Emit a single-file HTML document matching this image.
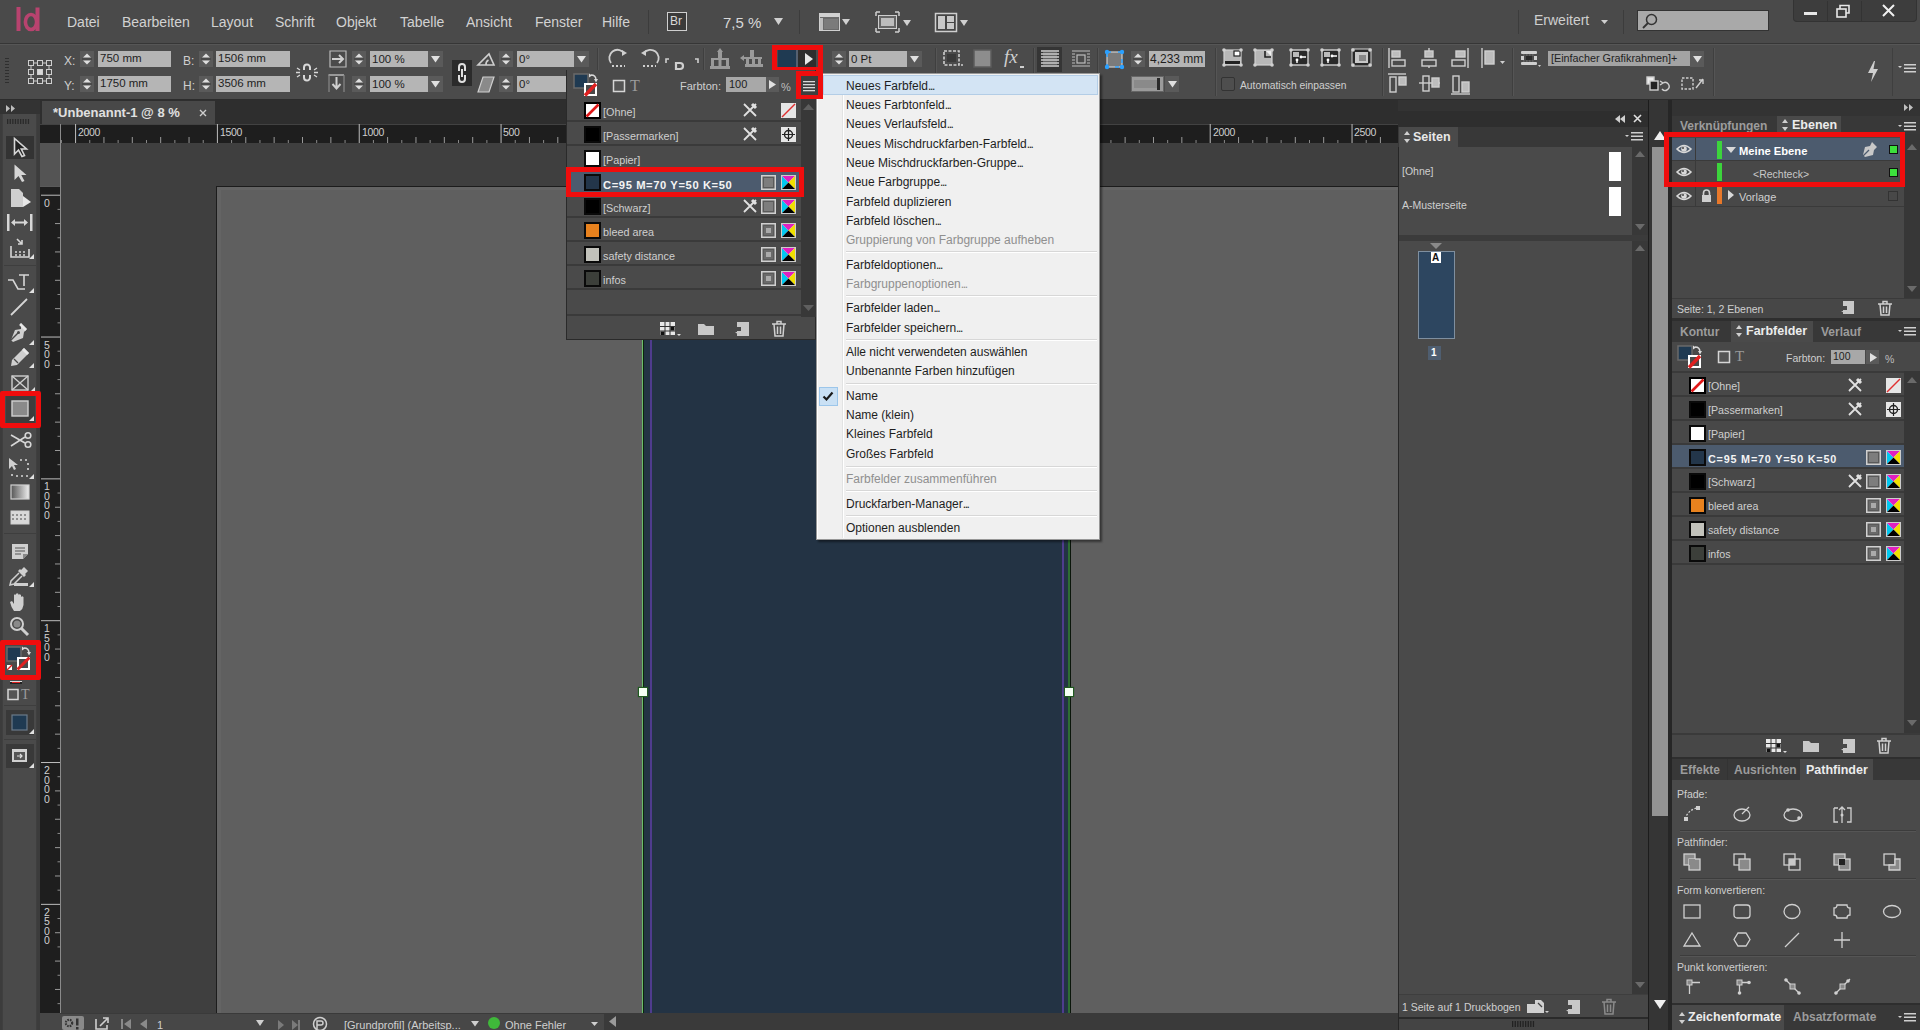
<!DOCTYPE html><html><head><meta charset="utf-8"><style>
*{margin:0;padding:0;box-sizing:border-box}
html,body{width:1920px;height:1030px;overflow:hidden;background:#424242;font-family:"Liberation Sans",sans-serif;color:#d8d8d8}
.a{position:absolute}
.t{white-space:nowrap;line-height:1}
svg{position:absolute;overflow:visible}
</style></head><body><div class="a" style="left:0px;top:0px;width:1920px;height:43px;background:#4a4a4a;"></div>
<div class="a" style="left:0px;top:43px;width:1920px;height:1px;background:#363636;"></div>
<div class="a" style="left:0px;top:44px;width:1920px;height:55px;background:#4b4b4b;"></div>
<div class="a" style="left:0px;top:44px;width:1920px;height:1px;background:#565656;"></div>
<div class="a" style="left:0px;top:99px;width:1920px;height:1px;background:#2c2c2c;"></div>
<div class="a" style="left:0px;top:100px;width:40px;height:930px;background:#3c3c3c;"></div>
<div class="a" style="left:0px;top:100px;width:40px;height:14px;background:#333333;"></div>
<div class="a" style="left:2px;top:114px;width:35px;height:916px;background:#4a4a4a;border-left:1px solid #3f3f3f;border-right:1px solid #3f3f3f;"></div>
<div class="a" style="left:40px;top:100px;width:1358px;height:24px;background:#2e2e2e;"></div>
<div class="a" style="left:42px;top:101px;width:173px;height:23px;background:#484848;"></div>
<div class="a" style="left:40px;top:125px;width:1358px;height:18px;background:#1e1e1e;"></div>
<div class="a" style="left:40px;top:143px;width:20px;height:872px;background:#1e1e1e;"></div>
<div class="a" style="left:40px;top:143px;width:20px;height:44px;background:#545454;"></div>
<div class="a" style="left:60px;top:124px;width:1px;height:891px;background:#8a8a8a;"></div>
<div class="a" style="left:61px;top:143px;width:1337px;height:872px;background:#3f3f3f;"></div>
<div class="a" style="left:216px;top:186px;width:1182px;height:829px;background:#5f5f5f;border-left:1px solid #1c1c1c;border-top:1px solid #1c1c1c;"></div>
<div class="a" style="left:217px;top:187px;width:4px;height:828px;background:#646464;"></div>
<div class="a" style="left:217px;top:187px;width:1181px;height:3px;background:#646464;"></div>
<div class="a" style="left:643px;top:186px;width:427px;height:829px;background:#233344;"></div>
<div class="a" style="left:642px;top:186px;width:1px;height:829px;background:#6cbc6c;"></div>
<div class="a" style="left:643px;top:186px;width:1px;height:829px;background:#0a260a;"></div>
<div class="a" style="left:650px;top:186px;width:2px;height:829px;background:#4f3c8e;"></div>
<div class="a" style="left:1062px;top:186px;width:2px;height:829px;background:#4f3c8e;"></div>
<div class="a" style="left:1068px;top:186px;width:2px;height:829px;background:#2e6e32;"></div>
<div class="a" style="left:1070px;top:186px;width:1px;height:829px;background:#0a160a;"></div>
<div class="a" style="left:639px;top:688px;width:8px;height:8px;background:#f4fff4;box-shadow:0 0 1px 1px #1f5a1f;"></div>
<div class="a" style="left:1065px;top:688px;width:8px;height:8px;background:#f4fff4;box-shadow:0 0 1px 1px #1f5a1f;"></div>
<div class="a" style="left:40px;top:1015px;width:1358px;height:15px;background:#474747;"></div>
<div class="a t" style="left:53px;top:106px;font-size:13px;color:#e0e0e0;font-weight:bold;">*Unbenannt-1 @ 8 %</div>
<svg style="left:199px;top:109px" width="8" height="8"><path d="M1 1L7 7M7 1L1 7" stroke="#cfcfcf" stroke-width="1.4"/></svg>
<svg style="left:0;top:0" width="1920" height="1030"><rect x="60.89" y="140" width="1" height="3" fill="#8a8a8a"/><rect x="75.07" y="124" width="1" height="19" fill="#bdbdbd"/><rect x="89.25" y="140" width="1" height="3" fill="#8a8a8a"/><rect x="103.44" y="137" width="1" height="6" fill="#9a9a9a"/><rect x="117.62" y="140" width="1" height="3" fill="#8a8a8a"/><rect x="131.80" y="137" width="1" height="6" fill="#9a9a9a"/><rect x="145.99" y="140" width="1" height="3" fill="#8a8a8a"/><rect x="160.17" y="137" width="1" height="6" fill="#9a9a9a"/><rect x="174.35" y="140" width="1" height="3" fill="#8a8a8a"/><rect x="188.53" y="137" width="1" height="6" fill="#9a9a9a"/><rect x="202.72" y="140" width="1" height="3" fill="#8a8a8a"/><rect x="216.90" y="124" width="1" height="19" fill="#bdbdbd"/><rect x="231.08" y="140" width="1" height="3" fill="#8a8a8a"/><rect x="245.27" y="137" width="1" height="6" fill="#9a9a9a"/><rect x="259.45" y="140" width="1" height="3" fill="#8a8a8a"/><rect x="273.63" y="137" width="1" height="6" fill="#9a9a9a"/><rect x="287.81" y="140" width="1" height="3" fill="#8a8a8a"/><rect x="302.00" y="137" width="1" height="6" fill="#9a9a9a"/><rect x="316.18" y="140" width="1" height="3" fill="#8a8a8a"/><rect x="330.36" y="137" width="1" height="6" fill="#9a9a9a"/><rect x="344.55" y="140" width="1" height="3" fill="#8a8a8a"/><rect x="358.73" y="124" width="1" height="19" fill="#bdbdbd"/><rect x="372.91" y="140" width="1" height="3" fill="#8a8a8a"/><rect x="387.10" y="137" width="1" height="6" fill="#9a9a9a"/><rect x="401.28" y="140" width="1" height="3" fill="#8a8a8a"/><rect x="415.46" y="137" width="1" height="6" fill="#9a9a9a"/><rect x="429.64" y="140" width="1" height="3" fill="#8a8a8a"/><rect x="443.83" y="137" width="1" height="6" fill="#9a9a9a"/><rect x="458.01" y="140" width="1" height="3" fill="#8a8a8a"/><rect x="472.19" y="137" width="1" height="6" fill="#9a9a9a"/><rect x="486.38" y="140" width="1" height="3" fill="#8a8a8a"/><rect x="500.56" y="124" width="1" height="19" fill="#bdbdbd"/><rect x="514.74" y="140" width="1" height="3" fill="#8a8a8a"/><rect x="528.93" y="137" width="1" height="6" fill="#9a9a9a"/><rect x="543.11" y="140" width="1" height="3" fill="#8a8a8a"/><rect x="557.29" y="137" width="1" height="6" fill="#9a9a9a"/><rect x="571.48" y="140" width="1" height="3" fill="#8a8a8a"/><rect x="585.66" y="137" width="1" height="6" fill="#9a9a9a"/><rect x="599.84" y="140" width="1" height="3" fill="#8a8a8a"/><rect x="614.02" y="137" width="1" height="6" fill="#9a9a9a"/><rect x="628.21" y="140" width="1" height="3" fill="#8a8a8a"/><rect x="642.39" y="124" width="1" height="19" fill="#bdbdbd"/><rect x="656.57" y="140" width="1" height="3" fill="#8a8a8a"/><rect x="670.76" y="137" width="1" height="6" fill="#9a9a9a"/><rect x="684.94" y="140" width="1" height="3" fill="#8a8a8a"/><rect x="699.12" y="137" width="1" height="6" fill="#9a9a9a"/><rect x="713.30" y="140" width="1" height="3" fill="#8a8a8a"/><rect x="727.49" y="137" width="1" height="6" fill="#9a9a9a"/><rect x="741.67" y="140" width="1" height="3" fill="#8a8a8a"/><rect x="755.85" y="137" width="1" height="6" fill="#9a9a9a"/><rect x="770.04" y="140" width="1" height="3" fill="#8a8a8a"/><rect x="784.22" y="124" width="1" height="19" fill="#bdbdbd"/><rect x="798.40" y="140" width="1" height="3" fill="#8a8a8a"/><rect x="812.59" y="137" width="1" height="6" fill="#9a9a9a"/><rect x="826.77" y="140" width="1" height="3" fill="#8a8a8a"/><rect x="840.95" y="137" width="1" height="6" fill="#9a9a9a"/><rect x="855.13" y="140" width="1" height="3" fill="#8a8a8a"/><rect x="869.32" y="137" width="1" height="6" fill="#9a9a9a"/><rect x="883.50" y="140" width="1" height="3" fill="#8a8a8a"/><rect x="897.68" y="137" width="1" height="6" fill="#9a9a9a"/><rect x="911.87" y="140" width="1" height="3" fill="#8a8a8a"/><rect x="926.05" y="124" width="1" height="19" fill="#bdbdbd"/><rect x="940.23" y="140" width="1" height="3" fill="#8a8a8a"/><rect x="954.42" y="137" width="1" height="6" fill="#9a9a9a"/><rect x="968.60" y="140" width="1" height="3" fill="#8a8a8a"/><rect x="982.78" y="137" width="1" height="6" fill="#9a9a9a"/><rect x="996.96" y="140" width="1" height="3" fill="#8a8a8a"/><rect x="1011.15" y="137" width="1" height="6" fill="#9a9a9a"/><rect x="1025.33" y="140" width="1" height="3" fill="#8a8a8a"/><rect x="1039.51" y="137" width="1" height="6" fill="#9a9a9a"/><rect x="1053.70" y="140" width="1" height="3" fill="#8a8a8a"/><rect x="1067.88" y="124" width="1" height="19" fill="#bdbdbd"/><rect x="1082.06" y="140" width="1" height="3" fill="#8a8a8a"/><rect x="1096.25" y="137" width="1" height="6" fill="#9a9a9a"/><rect x="1110.43" y="140" width="1" height="3" fill="#8a8a8a"/><rect x="1124.61" y="137" width="1" height="6" fill="#9a9a9a"/><rect x="1138.80" y="140" width="1" height="3" fill="#8a8a8a"/><rect x="1152.98" y="137" width="1" height="6" fill="#9a9a9a"/><rect x="1167.16" y="140" width="1" height="3" fill="#8a8a8a"/><rect x="1181.34" y="137" width="1" height="6" fill="#9a9a9a"/><rect x="1195.53" y="140" width="1" height="3" fill="#8a8a8a"/><rect x="1209.71" y="124" width="1" height="19" fill="#bdbdbd"/><rect x="1223.89" y="140" width="1" height="3" fill="#8a8a8a"/><rect x="1238.08" y="137" width="1" height="6" fill="#9a9a9a"/><rect x="1252.26" y="140" width="1" height="3" fill="#8a8a8a"/><rect x="1266.44" y="137" width="1" height="6" fill="#9a9a9a"/><rect x="1280.62" y="140" width="1" height="3" fill="#8a8a8a"/><rect x="1294.81" y="137" width="1" height="6" fill="#9a9a9a"/><rect x="1308.99" y="140" width="1" height="3" fill="#8a8a8a"/><rect x="1323.17" y="137" width="1" height="6" fill="#9a9a9a"/><rect x="1337.36" y="140" width="1" height="3" fill="#8a8a8a"/><rect x="1351.54" y="124" width="1" height="19" fill="#bdbdbd"/><rect x="1365.72" y="140" width="1" height="3" fill="#8a8a8a"/><rect x="1379.91" y="137" width="1" height="6" fill="#9a9a9a"/></svg>
<div class="a t" style="left:78px;top:127px;font-size:10.5px;color:#cfcfcf;letter-spacing:-0.3px;">2000</div>
<div class="a t" style="left:220px;top:127px;font-size:10.5px;color:#cfcfcf;letter-spacing:-0.3px;">1500</div>
<div class="a t" style="left:362px;top:127px;font-size:10.5px;color:#cfcfcf;letter-spacing:-0.3px;">1000</div>
<div class="a t" style="left:503px;top:127px;font-size:10.5px;color:#cfcfcf;letter-spacing:-0.3px;">500</div>
<div class="a t" style="left:645px;top:127px;font-size:10.5px;color:#cfcfcf;letter-spacing:-0.3px;">0</div>
<div class="a t" style="left:787px;top:127px;font-size:10.5px;color:#cfcfcf;letter-spacing:-0.3px;">500</div>
<div class="a t" style="left:929px;top:127px;font-size:10.5px;color:#cfcfcf;letter-spacing:-0.3px;">1000</div>
<div class="a t" style="left:1071px;top:127px;font-size:10.5px;color:#cfcfcf;letter-spacing:-0.3px;">1500</div>
<div class="a t" style="left:1213px;top:127px;font-size:10.5px;color:#cfcfcf;letter-spacing:-0.3px;">2000</div>
<div class="a t" style="left:1354px;top:127px;font-size:10.5px;color:#cfcfcf;letter-spacing:-0.3px;">2500</div>
<svg style="left:0;top:0" width="1920" height="1030"><rect x="41" y="194.70" width="19" height="1" fill="#bdbdbd"/><rect x="57.5" y="208.88" width="2.5" height="1" fill="#8a8a8a"/><rect x="55" y="223.07" width="5" height="1" fill="#9a9a9a"/><rect x="57.5" y="237.25" width="2.5" height="1" fill="#8a8a8a"/><rect x="55" y="251.43" width="5" height="1" fill="#9a9a9a"/><rect x="57.5" y="265.62" width="2.5" height="1" fill="#8a8a8a"/><rect x="55" y="279.80" width="5" height="1" fill="#9a9a9a"/><rect x="57.5" y="293.98" width="2.5" height="1" fill="#8a8a8a"/><rect x="55" y="308.16" width="5" height="1" fill="#9a9a9a"/><rect x="57.5" y="322.35" width="2.5" height="1" fill="#8a8a8a"/><rect x="41" y="336.53" width="19" height="1" fill="#bdbdbd"/><rect x="57.5" y="350.71" width="2.5" height="1" fill="#8a8a8a"/><rect x="55" y="364.90" width="5" height="1" fill="#9a9a9a"/><rect x="57.5" y="379.08" width="2.5" height="1" fill="#8a8a8a"/><rect x="55" y="393.26" width="5" height="1" fill="#9a9a9a"/><rect x="57.5" y="407.44" width="2.5" height="1" fill="#8a8a8a"/><rect x="55" y="421.63" width="5" height="1" fill="#9a9a9a"/><rect x="57.5" y="435.81" width="2.5" height="1" fill="#8a8a8a"/><rect x="55" y="449.99" width="5" height="1" fill="#9a9a9a"/><rect x="57.5" y="464.18" width="2.5" height="1" fill="#8a8a8a"/><rect x="41" y="478.36" width="19" height="1" fill="#bdbdbd"/><rect x="57.5" y="492.54" width="2.5" height="1" fill="#8a8a8a"/><rect x="55" y="506.73" width="5" height="1" fill="#9a9a9a"/><rect x="57.5" y="520.91" width="2.5" height="1" fill="#8a8a8a"/><rect x="55" y="535.09" width="5" height="1" fill="#9a9a9a"/><rect x="57.5" y="549.27" width="2.5" height="1" fill="#8a8a8a"/><rect x="55" y="563.46" width="5" height="1" fill="#9a9a9a"/><rect x="57.5" y="577.64" width="2.5" height="1" fill="#8a8a8a"/><rect x="55" y="591.82" width="5" height="1" fill="#9a9a9a"/><rect x="57.5" y="606.01" width="2.5" height="1" fill="#8a8a8a"/><rect x="41" y="620.19" width="19" height="1" fill="#bdbdbd"/><rect x="57.5" y="634.37" width="2.5" height="1" fill="#8a8a8a"/><rect x="55" y="648.56" width="5" height="1" fill="#9a9a9a"/><rect x="57.5" y="662.74" width="2.5" height="1" fill="#8a8a8a"/><rect x="55" y="676.92" width="5" height="1" fill="#9a9a9a"/><rect x="57.5" y="691.11" width="2.5" height="1" fill="#8a8a8a"/><rect x="55" y="705.29" width="5" height="1" fill="#9a9a9a"/><rect x="57.5" y="719.47" width="2.5" height="1" fill="#8a8a8a"/><rect x="55" y="733.65" width="5" height="1" fill="#9a9a9a"/><rect x="57.5" y="747.84" width="2.5" height="1" fill="#8a8a8a"/><rect x="41" y="762.02" width="19" height="1" fill="#bdbdbd"/><rect x="57.5" y="776.20" width="2.5" height="1" fill="#8a8a8a"/><rect x="55" y="790.39" width="5" height="1" fill="#9a9a9a"/><rect x="57.5" y="804.57" width="2.5" height="1" fill="#8a8a8a"/><rect x="55" y="818.75" width="5" height="1" fill="#9a9a9a"/><rect x="57.5" y="832.93" width="2.5" height="1" fill="#8a8a8a"/><rect x="55" y="847.12" width="5" height="1" fill="#9a9a9a"/><rect x="57.5" y="861.30" width="2.5" height="1" fill="#8a8a8a"/><rect x="55" y="875.48" width="5" height="1" fill="#9a9a9a"/><rect x="57.5" y="889.67" width="2.5" height="1" fill="#8a8a8a"/><rect x="41" y="903.85" width="19" height="1" fill="#bdbdbd"/><rect x="57.5" y="918.03" width="2.5" height="1" fill="#8a8a8a"/><rect x="55" y="932.22" width="5" height="1" fill="#9a9a9a"/><rect x="57.5" y="946.40" width="2.5" height="1" fill="#8a8a8a"/><rect x="55" y="960.58" width="5" height="1" fill="#9a9a9a"/><rect x="57.5" y="974.76" width="2.5" height="1" fill="#8a8a8a"/><rect x="55" y="988.95" width="5" height="1" fill="#9a9a9a"/><rect x="57.5" y="1003.13" width="2.5" height="1" fill="#8a8a8a"/></svg>
<div class="a" style="left:40px;top:186px;width:20px;height:1px;background:#5a5a5a;"></div>
<div class="a t" style="left:44px;top:198px;font-size:10.5px;color:#d0d0d0;">0</div>
<div class="a t" style="left:44px;top:340px;font-size:10.5px;color:#d0d0d0;">5</div>
<div class="a t" style="left:44px;top:349px;font-size:10.5px;color:#d0d0d0;">0</div>
<div class="a t" style="left:44px;top:359px;font-size:10.5px;color:#d0d0d0;">0</div>
<div class="a t" style="left:44px;top:481px;font-size:10.5px;color:#d0d0d0;">1</div>
<div class="a t" style="left:44px;top:491px;font-size:10.5px;color:#d0d0d0;">0</div>
<div class="a t" style="left:44px;top:500px;font-size:10.5px;color:#d0d0d0;">0</div>
<div class="a t" style="left:44px;top:510px;font-size:10.5px;color:#d0d0d0;">0</div>
<div class="a t" style="left:44px;top:623px;font-size:10.5px;color:#d0d0d0;">1</div>
<div class="a t" style="left:44px;top:633px;font-size:10.5px;color:#d0d0d0;">5</div>
<div class="a t" style="left:44px;top:642px;font-size:10.5px;color:#d0d0d0;">0</div>
<div class="a t" style="left:44px;top:652px;font-size:10.5px;color:#d0d0d0;">0</div>
<div class="a t" style="left:44px;top:765px;font-size:10.5px;color:#d0d0d0;">2</div>
<div class="a t" style="left:44px;top:775px;font-size:10.5px;color:#d0d0d0;">0</div>
<div class="a t" style="left:44px;top:784px;font-size:10.5px;color:#d0d0d0;">0</div>
<div class="a t" style="left:44px;top:794px;font-size:10.5px;color:#d0d0d0;">0</div>
<div class="a t" style="left:44px;top:907px;font-size:10.5px;color:#d0d0d0;">2</div>
<div class="a t" style="left:44px;top:916px;font-size:10.5px;color:#d0d0d0;">5</div>
<div class="a t" style="left:44px;top:926px;font-size:10.5px;color:#d0d0d0;">0</div>
<div class="a t" style="left:44px;top:935px;font-size:10.5px;color:#d0d0d0;">0</div>
<div class="a" style="left:40px;top:1013px;width:1358px;height:17px;background:#474747;"></div>
<div class="a" style="left:60px;top:1013px;width:1338px;height:1px;background:#3a3a3a;"></div>
<div class="a" style="left:62px;top:1016px;width:22px;height:14px;background:#8a8a8a;border-radius:2px;"></div>
<svg style="left:64px;top:1017px" width="20" height="13"><circle cx="5" cy="6" r="3.2" fill="none" stroke="#333" stroke-width="2.2" stroke-dasharray="1.6 1"/><rect x="12" y="1.5" width="2.5" height="7" fill="#333"/><rect x="12" y="10" width="2.5" height="2.5" fill="#333"/></svg>
<svg style="left:95px;top:1016px" width="16" height="14" fill="none" stroke="#cfcfcf" stroke-width="1.6"><path d="M1 3V13H12V9"/><path d="M5 10L12 3M8 2H13V7" /></svg>
<svg style="left:120px;top:1018px" width="50" height="12" fill="#8a8a8a"><rect x="1" y="1" width="2" height="10"/><path d="M11 1L4 6L11 11Z"/><path d="M27 1L20 6L27 11Z"/></svg>
<div class="a t" style="left:157px;top:1020px;font-size:11px;color:#cfcfcf;">1</div>
<svg style="left:256px;top:1020px" width="60" height="12" fill="#cfcfcf"><path d="M0 0H8L4 6Z"/><path d="M22 0L28 5L22 10Z" fill="#7a7a7a"/><path d="M36 0L42 5L36 10Z" fill="#7a7a7a"/><rect x="42" y="0" width="2" height="10" fill="#7a7a7a"/></svg>
<svg style="left:312px;top:1016px" width="20" height="14" fill="none" stroke="#cfcfcf" stroke-width="1.5"><circle cx="8" cy="8" r="6.5"/><path d="M5 13V5H9A2 2 0 0 1 9 9H5" /></svg>
<div class="a t" style="left:344px;top:1020px;font-size:11px;color:#cfcfcf;">[Grundprofil] (Arbeitsp...</div>
<svg style="left:471px;top:1021px" width="9" height="6"><path d="M0 0H8L4 5.5Z" fill="#cfcfcf"/></svg>
<div class="a" style="left:488px;top:1017px;width:12px;height:12px;background:#3fb83a;border-radius:50%;"></div>
<div class="a t" style="left:505px;top:1020px;font-size:11px;color:#cfcfcf;">Ohne Fehler</div>
<svg style="left:591px;top:1022px" width="8" height="5"><path d="M0 0H7L3.5 4Z" fill="#cfcfcf"/></svg>
<div class="a" style="left:604px;top:1013px;width:794px;height:17px;background:#3a3a3a;"></div>
<svg style="left:609px;top:1016px" width="8" height="11"><path d="M7 0L0 5.5L7 11Z" fill="#9a9a9a"/></svg>
<svg style="left:6px;top:105px" width="12" height="7" fill="#bdbdbd"><path d="M0 0L4 3.5L0 7Z M5 0L9 3.5L5 7Z"/></svg>
<svg style="left:7px;top:119px" width="24" height="5"><rect x="0.0" y="0" width="1.3" height="5" fill="#2a2a2a"/><rect x="2.6" y="0" width="1.3" height="5" fill="#2a2a2a"/><rect x="5.2" y="0" width="1.3" height="5" fill="#2a2a2a"/><rect x="7.8" y="0" width="1.3" height="5" fill="#2a2a2a"/><rect x="10.4" y="0" width="1.3" height="5" fill="#2a2a2a"/><rect x="13.0" y="0" width="1.3" height="5" fill="#2a2a2a"/><rect x="15.6" y="0" width="1.3" height="5" fill="#2a2a2a"/><rect x="18.2" y="0" width="1.3" height="5" fill="#2a2a2a"/><rect x="20.8" y="0" width="1.3" height="5" fill="#2a2a2a"/></svg>
<div class="a" style="left:6px;top:136px;width:28px;height:23px;background:#333333;"></div>
<svg style="left:13px;top:137px" width="16" height="21"><path d="M1.5 1.5V17L5.5 13L9 19.5L11.5 18.5L8.3 12H13.5Z" fill="#222" stroke="#d6d6d6" stroke-width="1.6"/></svg>
<svg style="left:13px;top:163px" width="16" height="20"><path d="M1.5 1.5V17L5.5 13L9 19L11.5 18L8.3 12H13.5Z" fill="#d6d6d6"/></svg>
<svg style="left:10px;top:188px" width="22" height="20"><path d="M1 1H9L13 5V19H1Z" fill="#cfcfcf"/><path d="M13 8V19L21 14Z" fill="#e8e8e8"/></svg>
<svg style="left:7px;top:214px" width="26" height="18" fill="#d6d6d6"><rect x="0" y="0" width="2.5" height="17"/><rect x="23" y="0" width="2.5" height="17"/><path d="M4 8.5L8 5V7.5H17V5L21 8.5L17 12V9.5H8V12Z"/></svg>
<svg style="left:9px;top:238px" width="24" height="22" fill="none" stroke="#d6d6d6" stroke-width="1.6"><path d="M2 8V19H20V11"/><path d="M8 1L13 6M13 2V6H9"/><path d="M6 14H8M10 14H12M14 14H16M6 17H8M10 17H12M14 17H16" /></svg>
<svg style="left:29px;top:254px" width="5" height="5"><path d="M5 0V5H0Z" fill="#e0e0e0"/></svg>
<div class="a" style="left:4px;top:265px;width:32px;height:1px;background:#3e3e3e;"></div>
<svg style="left:7px;top:272px" width="26" height="22" fill="none" stroke="#d6d6d6" stroke-width="1.6"><path d="M1 8L6 8L11 17H18"/><path d="M12 3H22M17 3V14"/></svg>
<svg style="left:29px;top:288px" width="5" height="5"><path d="M5 0V5H0Z" fill="#e0e0e0"/></svg>
<svg style="left:9px;top:297px" width="20" height="20"><path d="M2 18L18 2" stroke="#d6d6d6" stroke-width="1.8"/></svg>
<svg style="left:9px;top:321px" width="22" height="24"><path d="M12 2L18 8L15 11L14 17L4 21L2 19L6 9L12 8Z" fill="#cfcfcf"/><path d="M2 19L9 12" stroke="#4a4a4a" stroke-width="1.4"/><circle cx="9.5" cy="11.5" r="1.5" fill="#4a4a4a"/><path d="M11 3L17 9" stroke="#e8e8e8" stroke-width="2.5"/></svg>
<svg style="left:29px;top:340px" width="5" height="5"><path d="M5 0V5H0Z" fill="#e0e0e0"/></svg>
<svg style="left:9px;top:346px" width="22" height="22"><path d="M15 2L20 7L8 19L2 20L3 14Z" fill="#cfcfcf"/><path d="M5 13L9 17" stroke="#4a4a4a" stroke-width="1.2"/><path d="M15 2L20 7L18 9L13 4Z" fill="#e8e8e8"/></svg>
<svg style="left:29px;top:363px" width="5" height="5"><path d="M5 0V5H0Z" fill="#e0e0e0"/></svg>
<svg style="left:11px;top:375px" width="18" height="16" fill="none" stroke="#cfcfcf" stroke-width="1.4"><rect x="1" y="1" width="16" height="14"/><path d="M1 1L17 15M17 1L1 15"/></svg>
<svg style="left:30px;top:387px" width="5" height="5"><path d="M5 0V5H0Z" fill="#e0e0e0"/></svg>
<div class="a" style="left:6px;top:396px;width:29px;height:27px;background:#3d3d3d;"></div>
<svg style="left:11px;top:400px" width="18" height="17"><rect x="1" y="1" width="16" height="15" fill="#8a8a8a" stroke="#d0d0d0" stroke-width="1.4"/></svg>
<svg style="left:29px;top:416px" width="5" height="5"><path d="M5 0V5H0Z" fill="#e0e0e0"/></svg>
<div class="a" style="left:0px;top:391px;width:41px;height:37px;border:5px solid #f00d0d;border-radius:2px;"></div>
<svg style="left:10px;top:432px" width="22" height="18" fill="none" stroke="#d6d6d6" stroke-width="1.6"><path d="M1 3L15 11M1 14L15 5"/><circle cx="18" cy="12.5" r="2.8"/><circle cx="18" cy="3.5" r="2.8"/></svg>
<svg style="left:8px;top:457px" width="24" height="22" fill="none" stroke="#d6d6d6" stroke-width="1.6"><path d="M1 1V12L4 9L6 13L8 12L6 8H10Z" fill="#cfcfcf" stroke="none"/><path d="M12 3H14M17 3H19M20 6V8M20 11V13M4 17V19M8 19H10M13 19H15M18 19H20" /></svg>
<svg style="left:29px;top:474px" width="5" height="5"><path d="M5 0V5H0Z" fill="#e0e0e0"/></svg>
<svg style="left:10px;top:484px" width="20" height="16"><defs><linearGradient id="g1"><stop offset="0" stop-color="#555"/><stop offset="1" stop-color="#eee"/></linearGradient></defs><rect x="1" y="1" width="18" height="14" fill="url(#g1)" stroke="#d0d0d0" stroke-width="1.2"/></svg>
<svg style="left:10px;top:510px" width="20" height="15"><rect x="1" y="1" width="18" height="13" fill="#d8d8d8" stroke="#d0d0d0"/><path d="M2 5H18M2 9H18" stroke="#777" stroke-width="1.5" stroke-dasharray="2 2"/></svg>
<div class="a" style="left:4px;top:533px;width:32px;height:1px;background:#3e3e3e;"></div>
<svg style="left:11px;top:543px" width="18" height="17"><path d="M1 1H17V11L12 16H1Z" fill="#cfcfcf"/><path d="M4 5H14M4 8H14M4 11H10" stroke="#555" stroke-width="1.2"/><path d="M12 16V11H17Z" fill="#888"/></svg>
<svg style="left:8px;top:566px" width="24" height="21"><path d="M16 1L20 5L17 8L18 9L16 11L10 5L12 3L13 4Z" fill="#cfcfcf"/><path d="M11 7L3 15L2 19L6 18L14 10" fill="none" stroke="#cfcfcf" stroke-width="1.5"/><path d="M6 17H20V20H6Z" fill="#cfcfcf"/></svg>
<svg style="left:29px;top:582px" width="5" height="5"><path d="M5 0V5H0Z" fill="#e0e0e0"/></svg>
<svg style="left:9px;top:592px" width="20" height="20"><path d="M5 19Q2 15 1 10L3 9L5 12V3Q6 1.5 7 3V9V2Q8 0.5 9.5 2V9V3Q10.5 1.5 12 3V10V5Q13 3.5 14.5 5V13Q14 17 11 19Z" fill="#cfcfcf"/></svg>
<svg style="left:9px;top:616px" width="22" height="21" fill="none" stroke="#cfcfcf"><circle cx="8" cy="8" r="6" stroke-width="2"/><circle cx="8" cy="8" r="3.5" fill="#8a8a8a" stroke="none"/><path d="M12.5 12.5L19 19" stroke-width="3"/></svg>
<svg style="left:6px;top:646px" width="28" height="36">
<rect x="1" y="1" width="14" height="14" fill="#1f3a52" stroke="#6a6a6a" stroke-width="1.5"/>
<rect x="11" y="11" width="13" height="13" fill="#ffffff"/><rect x="13" y="13" width="9" height="9" fill="#4a4a4a"/>
<path d="M11.5 23.5L23.5 11.5" stroke="#e02020" stroke-width="3"/>
<path d="M18 2Q23 2 23 7" fill="none" stroke="#dcdcdc" stroke-width="1.4"/><path d="M16 0.5L19 2.5L16 4.5Z M21 6L23 9.5L25 6Z" fill="#dcdcdc"/>
<rect x="1" y="19" width="5" height="5" fill="#fff"/><path d="M1 24L6 19" stroke="#e02020" stroke-width="1.5"/>
</svg>
<div class="a" style="left:0px;top:640px;width:41px;height:40px;border:5px solid #f00d0d;border-radius:2px;"></div>
<div class="a" style="left:10px;top:681px;width:12px;height:1px;background:#dddddd;"></div>
<div class="a" style="left:10px;top:682px;width:12px;height:2px;background:#222;"></div>
<div class="a" style="left:12px;top:682px;width:8px;height:1px;background:#e02020;"></div>
<svg style="left:7px;top:688px" width="28" height="14"><rect x="1" y="1.5" width="10" height="10" fill="#555" stroke="#d6d6d6" stroke-width="1.5"/></svg>
<div class="a t" style="left:21px;top:688px;font-size:14px;color:#9a9a9a;font-family:Liberation Serif,serif;">T</div>
<div class="a" style="left:4px;top:705px;width:32px;height:1px;background:#3e3e3e;"></div>
<div class="a" style="left:6px;top:710px;width:28px;height:25px;background:#393939;"></div>
<svg style="left:11px;top:714px" width="18" height="18"><rect x="1" y="1" width="15" height="15" fill="#1f3a52" stroke="#6b7b8a" stroke-width="1.2"/></svg>
<svg style="left:29px;top:729px" width="5" height="5"><path d="M5 0V5H0Z" fill="#e0e0e0"/></svg>
<div class="a" style="left:4px;top:739px;width:32px;height:1px;background:#3e3e3e;"></div>
<div class="a" style="left:6px;top:744px;width:28px;height:24px;background:#393939;"></div>
<svg style="left:11px;top:748px" width="18" height="16"><rect x="1" y="1" width="15" height="13" fill="#d0d0d0"/><rect x="3" y="4" width="11" height="8" fill="#555"/><path d="M6 8H11M9 6L11 8L9 10" stroke="#e0e0e0" stroke-width="1.2" fill="none"/></svg>
<svg style="left:29px;top:763px" width="5" height="5"><path d="M5 0V5H0Z" fill="#e0e0e0"/></svg>
<svg style="left:14px;top:5px" width="30" height="30"><rect x="2.5" y="2" width="4" height="24" fill="#b8436f"/><rect x="21.5" y="2.5" width="4" height="23.5" fill="#b8436f"/><ellipse cx="17" cy="17" rx="5.6" ry="7.5" fill="none" stroke="#b8436f" stroke-width="3.6"/></svg>
<div class="a t" style="left:67px;top:15px;font-size:14px;color:#d2d2d2;">Datei</div>
<div class="a t" style="left:122px;top:15px;font-size:14px;color:#d2d2d2;">Bearbeiten</div>
<div class="a t" style="left:211px;top:15px;font-size:14px;color:#d2d2d2;">Layout</div>
<div class="a t" style="left:275px;top:15px;font-size:14px;color:#d2d2d2;">Schrift</div>
<div class="a t" style="left:336px;top:15px;font-size:14px;color:#d2d2d2;">Objekt</div>
<div class="a t" style="left:400px;top:15px;font-size:14px;color:#d2d2d2;">Tabelle</div>
<div class="a t" style="left:466px;top:15px;font-size:14px;color:#d2d2d2;">Ansicht</div>
<div class="a t" style="left:535px;top:15px;font-size:14px;color:#d2d2d2;">Fenster</div>
<div class="a t" style="left:602px;top:15px;font-size:14px;color:#d2d2d2;">Hilfe</div>
<div class="a" style="left:648px;top:10px;width:1px;height:24px;background:#3c3c3c;"></div>
<div class="a" style="left:667px;top:12px;width:20px;height:19px;border:1.5px solid #cfcfcf;background:#3a3a3a;"></div>
<div class="a t" style="left:670px;top:15px;font-size:12px;color:#d8d8d8;">Br</div>
<div class="a t" style="left:723px;top:15px;font-size:15px;color:#d8d8d8;">7,5 %</div>
<svg style="left:774px;top:18px" width="10" height="8"><path d="M0 0H9L4.5 7Z" fill="#d0d0d0"/></svg>
<div class="a" style="left:799px;top:10px;width:1px;height:24px;background:#3c3c3c;"></div>
<svg style="left:819px;top:12px" width="40" height="22">
<rect x="0.5" y="1.5" width="20" height="17" fill="#6a6a6a" stroke="#cfcfcf"/>
<rect x="1" y="2" width="19" height="3" fill="#d0d0d0"/><rect x="5" y="7" width="14" height="10" fill="#7b7b7b"/>
<rect x="1" y="6" width="3" height="12" fill="#bdbdbd"/>
<path d="M23 7H31L27 13Z" fill="#d0d0d0"/></svg>
<svg style="left:876px;top:12px" width="40" height="22">
<rect x="2.5" y="3.5" width="18" height="13" fill="#666" stroke="#cfcfcf"/>
<rect x="5" y="6" width="13" height="8" fill="#bdbdbd"/>
<path d="M0 0H4M0 0V4M23 0H19M23 0V4M0 20H4M0 20V16M23 20H19M23 20V16" stroke="#cfcfcf" stroke-width="1.5"/>
<path d="M27 8H35L31 14Z" fill="#d0d0d0"/></svg>
<svg style="left:934px;top:12px" width="40" height="22">
<rect x="1.5" y="1.5" width="21" height="18" fill="#444" stroke="#cfcfcf" stroke-width="1.5"/>
<rect x="4" y="4" width="7" height="13" fill="#c8c8c8"/><rect x="13" y="4" width="7" height="6" fill="#c8c8c8"/><rect x="13" y="11" width="7" height="6" fill="#c8c8c8"/>
<path d="M26 8H34L30 14Z" fill="#d0d0d0"/></svg>
<div class="a" style="left:1518px;top:10px;width:1px;height:24px;background:#3c3c3c;"></div>
<div class="a t" style="left:1534px;top:13px;font-size:14px;color:#cfcfcf;">Erweitert</div>
<svg style="left:1601px;top:20px" width="8" height="5"><path d="M0 0H7L3.5 4Z" fill="#d0d0d0"/></svg>
<div class="a" style="left:1623px;top:10px;width:1px;height:24px;background:#3c3c3c;"></div>
<div class="a" style="left:1637px;top:10px;width:132px;height:21px;background:#a9a9a9;border:1px solid #333;"></div>
<svg style="left:1641px;top:13px" width="18" height="16"><circle cx="10.5" cy="6.5" r="5" fill="none" stroke="#333" stroke-width="1.5"/><path d="M7 10L2 15" stroke="#333" stroke-width="1.8"/></svg>
<div class="a" style="left:1793px;top:0px;width:124px;height:22px;background:#3d3d3d;border-radius:0 0 4px 4px;border:1px solid #333;border-top:none;"></div>
<div class="a" style="left:1827px;top:1px;width:1px;height:20px;background:#333;"></div>
<div class="a" style="left:1861px;top:1px;width:1px;height:20px;background:#333;"></div>
<div class="a" style="left:1804px;top:12px;width:13px;height:3px;background:#e8e8e8;"></div>
<svg style="left:1836px;top:4px" width="18" height="14"><rect x="1" y="5" width="9" height="8" fill="none" stroke="#e8e8e8" stroke-width="1.6"/><path d="M4 5V1.5H13V9H10" fill="none" stroke="#e8e8e8" stroke-width="1.6"/></svg>
<svg style="left:1882px;top:4px" width="14" height="14"><path d="M1 1L12 12M12 1L1 12" stroke="#f0f0f0" stroke-width="2"/></svg>
<svg style="left:5px;top:58px" width="4" height="26"><rect x="0" y="0" width="4" height="1" fill="#2f2f2f"/><rect x="0" y="3" width="4" height="1" fill="#2f2f2f"/><rect x="0" y="6" width="4" height="1" fill="#2f2f2f"/><rect x="0" y="9" width="4" height="1" fill="#2f2f2f"/><rect x="0" y="12" width="4" height="1" fill="#2f2f2f"/><rect x="0" y="15" width="4" height="1" fill="#2f2f2f"/><rect x="0" y="18" width="4" height="1" fill="#2f2f2f"/><rect x="0" y="21" width="4" height="1" fill="#2f2f2f"/><rect x="0" y="24" width="4" height="1" fill="#2f2f2f"/></svg>
<svg style="left:27px;top:59px" width="26" height="26" fill="none" stroke="#cfcfcf" stroke-width="1">
<rect x="1.5" y="1.5" width="5" height="5"/><rect x="10.5" y="1.5" width="5" height="5"/><rect x="19.5" y="1.5" width="5" height="5"/>
<rect x="1.5" y="10.5" width="5" height="5"/><rect x="10.5" y="10.5" width="5" height="5" fill="#d8d8d8"/><rect x="19.5" y="10.5" width="5" height="5"/>
<rect x="1.5" y="19.5" width="5" height="5"/><rect x="10.5" y="19.5" width="5" height="5"/><rect x="19.5" y="19.5" width="5" height="5"/>
<path d="M6.5 4H10.5M15.5 4H19.5M6.5 22H10.5M15.5 22H19.5M4 6.5V10.5M4 15.5V19.5M22 6.5V10.5M22 15.5V19.5"/></svg>
<div class="a t" style="left:64px;top:55px;font-size:12px;color:#cfcfcf;">X:</div>
<div class="a t" style="left:64px;top:80px;font-size:12px;color:#cfcfcf;">Y:</div>
<svg style="left:80px;top:51px" width="14" height="16"><rect width="14" height="16" fill="#5a5a5a"/><path d="M3 6.5L7 2.5L11 6.5Z M3 9.5L7 13.5L11 9.5Z" fill="#dedede"/><rect x="2" y="7.5" width="10" height="1" fill="#3a3a3a"/></svg>
<svg style="left:80px;top:76px" width="14" height="16"><rect width="14" height="16" fill="#5a5a5a"/><path d="M3 6.5L7 2.5L11 6.5Z M3 9.5L7 13.5L11 9.5Z" fill="#dedede"/><rect x="2" y="7.5" width="10" height="1" fill="#3a3a3a"/></svg>
<div class="a" style="left:98px;top:51px;width:73px;height:16px;background:#b5b5b5;"></div>
<div class="a t" style="left:100px;top:53px;font-size:11.5px;color:#1e1e1e;">750 mm</div>
<div class="a" style="left:98px;top:76px;width:73px;height:16px;background:#b5b5b5;"></div>
<div class="a t" style="left:100px;top:78px;font-size:11.5px;color:#1e1e1e;">1750 mm</div>
<div class="a t" style="left:183px;top:55px;font-size:12px;color:#cfcfcf;">B:</div>
<div class="a t" style="left:183px;top:80px;font-size:12px;color:#cfcfcf;">H:</div>
<svg style="left:199px;top:51px" width="14" height="16"><rect width="14" height="16" fill="#5a5a5a"/><path d="M3 6.5L7 2.5L11 6.5Z M3 9.5L7 13.5L11 9.5Z" fill="#dedede"/><rect x="2" y="7.5" width="10" height="1" fill="#3a3a3a"/></svg>
<svg style="left:199px;top:76px" width="14" height="16"><rect width="14" height="16" fill="#5a5a5a"/><path d="M3 6.5L7 2.5L11 6.5Z M3 9.5L7 13.5L11 9.5Z" fill="#dedede"/><rect x="2" y="7.5" width="10" height="1" fill="#3a3a3a"/></svg>
<div class="a" style="left:216px;top:51px;width:74px;height:16px;background:#b5b5b5;"></div>
<div class="a t" style="left:218px;top:53px;font-size:11.5px;color:#1e1e1e;">1506 mm</div>
<div class="a" style="left:216px;top:76px;width:74px;height:16px;background:#b5b5b5;"></div>
<div class="a t" style="left:218px;top:78px;font-size:11.5px;color:#1e1e1e;">3506 mm</div>
<svg style="left:296px;top:63px" width="22" height="20" fill="none" stroke="#d8d8d8" stroke-width="2">
<path d="M8 7V4.5A3 3 0 0 1 14 4.5V7M8 12V14.5A3 3 0 0 0 14 14.5V12"/>
<path d="M1 5L4 7M1 14L4 12M21 5L18 7M21 14L18 12M0 9.5H4M18 9.5H22" stroke-width="1.3"/></svg>
<svg style="left:329px;top:50px" width="20" height="18" fill="none" stroke="#cfcfcf" stroke-width="1.2">
<path d="M1 1H17V17H1Z" stroke="#bbb"/><path d="M3 9H13M10 5L14 9L10 13" stroke-width="2"/></svg>
<svg style="left:328px;top:74px" width="18" height="19" fill="none" stroke="#cfcfcf" stroke-width="1.2">
<path d="M0.5 1H16" /><path d="M8.5 3V13M4.5 10L8.5 14.5L12.5 10" stroke-width="2"/><path d="M1 1V18M16 1V18" stroke="#888"/></svg>
<svg style="left:352px;top:51px" width="14" height="16"><rect width="14" height="16" fill="#5a5a5a"/><path d="M3 6.5L7 2.5L11 6.5Z M3 9.5L7 13.5L11 9.5Z" fill="#dedede"/><rect x="2" y="7.5" width="10" height="1" fill="#3a3a3a"/></svg>
<svg style="left:352px;top:76px" width="14" height="16"><rect width="14" height="16" fill="#5a5a5a"/><path d="M3 6.5L7 2.5L11 6.5Z M3 9.5L7 13.5L11 9.5Z" fill="#dedede"/><rect x="2" y="7.5" width="10" height="1" fill="#3a3a3a"/></svg>
<div class="a" style="left:370px;top:51px;width:58px;height:16px;background:#b5b5b5;"></div>
<div class="a t" style="left:372px;top:54px;font-size:11.5px;color:#1e1e1e;">100 %</div>
<div class="a" style="left:370px;top:76px;width:58px;height:16px;background:#b5b5b5;"></div>
<div class="a t" style="left:372px;top:79px;font-size:11.5px;color:#1e1e1e;">100 %</div>
<div class="a" style="left:428px;top:51px;width:15px;height:16px;background:#5a5a5a;"></div>
<svg style="left:431px;top:56px" width="10" height="7"><path d="M0 0H9L4.5 6.5Z" fill="#e0e0e0"/></svg>
<div class="a" style="left:428px;top:76px;width:15px;height:16px;background:#5a5a5a;"></div>
<svg style="left:431px;top:81px" width="10" height="7"><path d="M0 0H9L4.5 6.5Z" fill="#e0e0e0"/></svg>
<div class="a" style="left:452px;top:60px;width:20px;height:26px;background:#2b2b2b;"></div>
<svg style="left:455px;top:62px" width="14" height="22" fill="none" stroke="#e0e0e0" stroke-width="2"><path d="M4 9V5A3 3 0 0 1 10 5V9M4 13V17A3 3 0 0 0 10 17V13M7 7V15"/></svg>
<svg style="left:477px;top:51px" width="18" height="16" fill="none" stroke="#cfcfcf" stroke-width="1.6"><path d="M1 14H17L12 3Z M9 14A5 5 0 0 1 11.5 9"/></svg>
<svg style="left:477px;top:76px" width="18" height="17"><path d="M1 16L6 1H17L12 16Z" fill="#8a8a8a" stroke="#cfcfcf" stroke-width="1.2"/></svg>
<svg style="left:499px;top:51px" width="14" height="16"><rect width="14" height="16" fill="#5a5a5a"/><path d="M3 6.5L7 2.5L11 6.5Z M3 9.5L7 13.5L11 9.5Z" fill="#dedede"/><rect x="2" y="7.5" width="10" height="1" fill="#3a3a3a"/></svg>
<svg style="left:499px;top:76px" width="14" height="16"><rect width="14" height="16" fill="#5a5a5a"/><path d="M3 6.5L7 2.5L11 6.5Z M3 9.5L7 13.5L11 9.5Z" fill="#dedede"/><rect x="2" y="7.5" width="10" height="1" fill="#3a3a3a"/></svg>
<div class="a" style="left:517px;top:51px;width:57px;height:16px;background:#b5b5b5;"></div>
<div class="a t" style="left:519px;top:54px;font-size:11.5px;color:#1e1e1e;">0°</div>
<div class="a" style="left:517px;top:76px;width:57px;height:16px;background:#b5b5b5;"></div>
<div class="a t" style="left:519px;top:79px;font-size:11.5px;color:#1e1e1e;">0°</div>
<div class="a" style="left:574px;top:51px;width:15px;height:16px;background:#5a5a5a;"></div>
<svg style="left:577px;top:56px" width="10" height="7"><path d="M0 0H9L4.5 6.5Z" fill="#e0e0e0"/></svg>
<div class="a" style="left:597px;top:48px;width:1px;height:48px;background:#3f3f3f;"></div>
<div class="a" style="left:598px;top:48px;width:1px;height:48px;background:#555;"></div>
<svg style="left:608px;top:48px" width="22" height="22" fill="none" stroke="#cfcfcf" stroke-width="1.8"><path d="M3 15A8 8 0 0 1 16 5" stroke-dasharray="20 0"/><path d="M14 2L19 5L14 8Z" fill="#cfcfcf" stroke="none"/><path d="M4 18H17" stroke-dasharray="2 2"/></svg>
<svg style="left:638px;top:48px" width="22" height="22" fill="none" stroke="#cfcfcf" stroke-width="1.8"><path d="M19 15A8 8 0 0 0 6 5"/><path d="M8 2L3 5L8 8Z" fill="#cfcfcf" stroke="none"/><path d="M5 18H18" stroke-dasharray="2 2"/></svg>
<svg style="left:665px;top:56px" width="34" height="16" fill="none" stroke="#cfcfcf" stroke-width="1.6"><path d="M1 7V3H4M33 7V3H30"/><path d="M11 15V7H15A3 3 0 0 1 15 13H11" stroke-width="2.2"/></svg>
<div class="a" style="left:703px;top:48px;width:1px;height:48px;background:#3f3f3f;"></div>
<div class="a" style="left:704px;top:48px;width:1px;height:48px;background:#555;"></div>
<svg style="left:710px;top:48px" width="20" height="22" fill="#9a9a9a"><path d="M10 0L13 4H7Z"/><rect x="8" y="4" width="4" height="6"/><rect x="1" y="10" width="18" height="2"/><rect x="1" y="12" width="3" height="6"/><rect x="8.5" y="12" width="3" height="6"/><rect x="16" y="12" width="3" height="6"/><rect x="0" y="18" width="20" height="3"/></svg>
<svg style="left:740px;top:50px" width="24" height="18" fill="#9a9a9a"><path d="M0 8L4 5V11Z"/><rect x="4" y="7" width="18" height="2"/><rect x="10" y="0" width="4" height="7"/><rect x="6" y="9" width="3" height="7"/><rect x="12" y="9" width="3" height="7"/><rect x="18" y="9" width="3" height="7"/><rect x="5" y="14" width="18" height="3"/></svg>
<div class="a" style="left:778px;top:50px;width:38px;height:19px;background:#2e2e2e;"></div>
<div class="a" style="left:778px;top:50px;width:18px;height:18px;background:#1f3a52;"></div>
<div class="a" style="left:796px;top:50px;width:2px;height:18px;background:#556070;"></div>
<svg style="left:804px;top:53px" width="10" height="12"><path d="M1 0L9 6L1 12Z" fill="#e8e8e8"/></svg>
<div class="a" style="left:772px;top:45px;width:51px;height:27px;border:5px solid #f00d0d;"></div>
<svg style="left:832px;top:51px" width="14" height="16"><rect width="14" height="16" fill="#5a5a5a"/><path d="M3 6.5L7 2.5L11 6.5Z M3 9.5L7 13.5L11 9.5Z" fill="#dedede"/><rect x="2" y="7.5" width="10" height="1" fill="#3a3a3a"/></svg>
<div class="a" style="left:849px;top:51px;width:58px;height:16px;background:#b5b5b5;"></div>
<div class="a t" style="left:851px;top:54px;font-size:11.5px;color:#1e1e1e;">0 Pt</div>
<div class="a" style="left:907px;top:51px;width:15px;height:16px;background:#5a5a5a;"></div>
<svg style="left:910px;top:56px" width="10" height="7"><path d="M0 0H9L4.5 6.5Z" fill="#e0e0e0"/></svg>
<div class="a" style="left:935px;top:48px;width:1px;height:48px;background:#3f3f3f;"></div>
<div class="a" style="left:936px;top:48px;width:1px;height:48px;background:#555;"></div>
<svg style="left:942px;top:49px" width="22" height="20" fill="none" stroke="#cfcfcf" stroke-width="1.6"><rect x="2" y="2" width="15" height="14" stroke-dasharray="3 1.5"/><rect x="5" y="5" width="9" height="8" fill="#3a3a3a" stroke="none"/><path d="M19 16H21" /></svg>
<svg style="left:973px;top:49px" width="20" height="20"><rect x="1" y="1" width="17" height="17" fill="#8d8d8d" stroke="#5c5c5c" stroke-width="1.5"/></svg>
<div class="a t" style="left:1004px;top:47px;font-size:19px;color:#cfcfcf;font-family:Liberation Serif,serif;"><i>fx</i></div>
<div class="a" style="left:1020px;top:66px;width:4px;height:2px;background:#cfcfcf;"></div>
<div class="a" style="left:1033px;top:48px;width:1px;height:48px;background:#3f3f3f;"></div>
<div class="a" style="left:1034px;top:48px;width:1px;height:48px;background:#555;"></div>
<div class="a" style="left:1037px;top:47px;width:25px;height:25px;background:#353535;"></div>
<svg style="left:1040px;top:49px" width="20" height="20" fill="none" stroke="#cfcfcf" stroke-width="1.3"><path d="M1 2H19M1 5H19M1 8H19M1 11H19M1 14H19M1 17H19"/><rect x="3" y="3" width="14" height="13" fill="#bdbdbd" opacity="0.35" stroke="none"/></svg>
<svg style="left:1071px;top:49px" width="20" height="20" fill="none" stroke="#bdbdbd" stroke-width="1.2"><path d="M1 2H19M1 5H4M16 5H19M1 8H4M16 8H19M1 11H4M16 11H19M1 14H4M16 14H19M1 17H19"/><rect x="6" y="6" width="8" height="8"/></svg>
<div class="a" style="left:1097px;top:48px;width:1px;height:48px;background:#3f3f3f;"></div>
<div class="a" style="left:1098px;top:48px;width:1px;height:48px;background:#555;"></div>
<svg style="left:1104px;top:49px" width="22" height="22"><rect x="3" y="3" width="15" height="15" fill="#7b7b7b" stroke="#cfcfcf" stroke-width="1.2"/><g fill="#2aa0ff"><circle cx="3" cy="3" r="2.2"/><circle cx="18" cy="3" r="2.2"/><circle cx="3" cy="18" r="2.2"/><circle cx="18" cy="18" r="2.2"/></g><path d="M3 3H18V18H3Z" fill="none" stroke="#2aa0ff" stroke-width="1.5" stroke-dasharray="4 7" /></svg>
<svg style="left:1131px;top:51px" width="14" height="16"><rect width="14" height="16" fill="#5a5a5a"/><path d="M3 6.5L7 2.5L11 6.5Z M3 9.5L7 13.5L11 9.5Z" fill="#dedede"/><rect x="2" y="7.5" width="10" height="1" fill="#3a3a3a"/></svg>
<div class="a" style="left:1149px;top:51px;width:56px;height:16px;background:#b5b5b5;"></div>
<div class="a t" style="left:1150px;top:53px;font-size:12px;color:#1e1e1e;">4,233 mm</div>
<div class="a" style="left:1131px;top:76px;width:33px;height:16px;background:#9b9b9b;border:1px solid #666;"></div>
<div class="a" style="left:1157px;top:78px;width:3px;height:12px;background:#2a2a2a;"></div>
<div class="a" style="left:1134px;top:80px;width:23px;height:8px;background:#8a8a8a;"></div>
<div class="a" style="left:1165px;top:76px;width:14px;height:16px;background:#5a5a5a;"></div>
<svg style="left:1168px;top:81px" width="10" height="7"><path d="M0 0H9L4.5 6.5Z" fill="#e0e0e0"/></svg>
<div class="a" style="left:1215px;top:48px;width:1px;height:48px;background:#3f3f3f;"></div>
<div class="a" style="left:1216px;top:48px;width:1px;height:48px;background:#555;"></div>
<svg style="left:1222px;top:48px" width="22" height="20"><rect x="2" y="2" width="17" height="15" fill="#b8b8b8" stroke="#d0d0d0" stroke-width="1.2"/><rect x="12" y="3" width="6" height="5" fill="#fff" stroke="#222" stroke-width="1.2"/><rect x="3" y="13" width="15" height="3" fill="#222"/><g fill="#d0d0d0"><circle cx="2" cy="2" r="1.8"/><circle cx="19" cy="2" r="1.8"/><circle cx="2" cy="17" r="1.8"/><circle cx="19" cy="17" r="1.8"/></g></svg>
<svg style="left:1253px;top:48px" width="22" height="20"><rect x="2" y="2" width="17" height="15" fill="#b8b8b8" stroke="#d0d0d0" stroke-width="1.2"/><path d="M12 3V9H18" fill="none" stroke="#222" stroke-width="1.6"/><path d="M13 3H18V8Z" fill="#eee"/><g fill="#d0d0d0"><circle cx="2" cy="2" r="1.8"/><circle cx="19" cy="2" r="1.8"/><circle cx="2" cy="17" r="1.8"/><circle cx="19" cy="17" r="1.8"/></g></svg>
<svg style="left:1289px;top:48px" width="22" height="20"><rect x="2" y="2" width="17" height="15" fill="#2a2a2a" stroke="#d0d0d0" stroke-width="1.4"/><rect x="4" y="4" width="6" height="5" fill="#bbb"/><path d="M12 9H17M8 11V15" stroke="#fff" stroke-width="1.4"/><circle cx="12" cy="9" r="1.4" fill="#fff"/><circle cx="8" cy="12" r="1.4" fill="#fff"/><g fill="#d0d0d0"><circle cx="2" cy="2" r="1.8"/><circle cx="19" cy="2" r="1.8"/><circle cx="2" cy="17" r="1.8"/><circle cx="19" cy="17" r="1.8"/></g></svg>
<svg style="left:1320px;top:48px" width="22" height="20"><rect x="2" y="2" width="17" height="15" fill="#2a2a2a" stroke="#d0d0d0" stroke-width="1.4"/><rect x="4" y="4" width="6" height="5" fill="#bbb"/><path d="M11 8H17M8 11V15" stroke="#fff" stroke-width="1.4"/><circle cx="12" cy="8" r="1.4" fill="#fff"/><circle cx="8" cy="12" r="1.4" fill="#fff"/><g fill="#d0d0d0"><circle cx="2" cy="2" r="1.8"/><circle cx="19" cy="2" r="1.8"/><circle cx="2" cy="17" r="1.8"/><circle cx="19" cy="17" r="1.8"/></g></svg>
<svg style="left:1351px;top:48px" width="22" height="20"><rect x="2.5" y="2.5" width="16" height="14" fill="#c8c8c8" stroke="#2a2a2a" stroke-width="3"/><rect x="1" y="1" width="19" height="17" fill="none" stroke="#d0d0d0" stroke-width="1"/><rect x="8" y="7" width="7" height="6" fill="#888"/><g fill="#d0d0d0"><circle cx="2" cy="2" r="1.8"/><circle cx="19" cy="2" r="1.8"/><circle cx="2" cy="17" r="1.8"/><circle cx="19" cy="17" r="1.8"/></g></svg>
<div class="a" style="left:1221px;top:77px;width:14px;height:14px;background:#4e4e4e;border:1px solid #333;border-radius:2px;"></div>
<div class="a t" style="left:1240px;top:81px;font-size:10.3px;color:#cfcfcf;">Automatisch einpassen</div>
<div class="a" style="left:1382px;top:48px;width:1px;height:48px;background:#3f3f3f;"></div>
<div class="a" style="left:1383px;top:48px;width:1px;height:48px;background:#555;"></div>
<svg style="left:1388px;top:48px" width="120" height="22" fill="none" stroke="#cfcfcf" stroke-width="1.4">
<path d="M1 0V20"/><rect x="4" y="3" width="8" height="6" fill="#bdbdbd"/><rect x="4" y="12" width="13" height="6"/>
<path d="M41 0V3M41 18V20"/><rect x="37" y="3" width="8" height="6" fill="#bdbdbd"/><rect x="34" y="12" width="14" height="6"/>
<path d="M80 0V20"/><rect x="68" y="3" width="9" height="6" fill="#bdbdbd"/><rect x="64" y="12" width="13" height="6"/>
<path d="M94 0V20"/><rect x="97" y="3" width="9" height="13" fill="#bdbdbd"/><path d="M112 13H117L114.5 16Z" fill="#cfcfcf" stroke="none"/></svg>
<svg style="left:1388px;top:73px" width="90" height="22" fill="none" stroke="#cfcfcf" stroke-width="1.4">
<path d="M0 1H18"/><rect x="2" y="4" width="6" height="15"/><rect x="11" y="4" width="7" height="8" fill="#bdbdbd"/>
<path d="M31 10H52"/><rect x="35" y="3" width="6" height="15"/><rect x="44" y="5" width="7" height="9" fill="#bdbdbd"/>
<path d="M63 21H82"/><rect x="65" y="3" width="6" height="16"/><rect x="74" y="9" width="7" height="10" fill="#bdbdbd"/></svg>
<div class="a" style="left:1512px;top:48px;width:1px;height:48px;background:#3f3f3f;"></div>
<div class="a" style="left:1513px;top:48px;width:1px;height:48px;background:#555;"></div>
<svg style="left:1520px;top:50px" width="22" height="18" fill="#cfcfcf"><rect x="1" y="1" width="16" height="3" rx="1"/><rect x="1" y="12" width="16" height="3" rx="1"/><rect x="1" y="6" width="3" height="4"/><rect x="14" y="6" width="3" height="4"/><rect x="6" y="6" width="6" height="4" fill="#2a2a2a"/><path d="M3 5H15M3 11H15" stroke="#777" stroke-width="1" stroke-dasharray="1.5 1.5"/><path d="M18 15H21L19.5 17Z"/></svg>
<div class="a" style="left:1548px;top:51px;width:142px;height:15px;background:#a3a3a3;"></div>
<div class="a t" style="left:1551px;top:53px;font-size:10.8px;color:#222;">[Einfacher Grafikrahmen]+</div>
<div class="a" style="left:1690px;top:51px;width:14px;height:16px;background:#5a5a5a;"></div>
<svg style="left:1693px;top:56px" width="10" height="7"><path d="M0 0H9L4.5 6.5Z" fill="#e0e0e0"/></svg>
<svg style="left:1646px;top:76px" width="60" height="18" fill="none" stroke="#cfcfcf" stroke-width="1.4">
<rect x="1" y="1" width="7" height="7" fill="#eee"/><rect x="4" y="5" width="8" height="9" fill="#222"/><path d="M17 7A4 4 0 1 1 16 13M14 5L17 7L14 9"/>
<rect x="36" y="2" width="11" height="11" stroke-dasharray="2.5 1.5"/><path d="M50 12L57 3M53 4H57V8"/></svg>
<div class="a" style="left:1713px;top:48px;width:1px;height:48px;background:#3f3f3f;"></div>
<div class="a" style="left:1714px;top:48px;width:1px;height:48px;background:#555;"></div>
<svg style="left:1866px;top:61px" width="14" height="22"><path d="M8 0L2 12H7L5 21L12 8H7.5L9 0Z" fill="#cfcfcf"/></svg>
<div class="a" style="left:1892px;top:48px;width:1px;height:48px;background:#3f3f3f;"></div>
<svg style="left:1898px;top:63px" width="18" height="12" fill="#cfcfcf"><path d="M0 3H4L2 5Z"/><rect x="6" y="1" width="12" height="1.5"/><rect x="6" y="4.5" width="12" height="1.5"/><rect x="6" y="8" width="12" height="1.5"/></svg>
<div class="a" style="left:1398px;top:100px;width:522px;height:930px;background:#333333;"></div>
<div class="a" style="left:1398px;top:111px;width:250px;height:919px;background:#4a4a4a;border-left:1px solid #262626;"></div>
<div class="a" style="left:1398px;top:111px;width:250px;height:16px;background:#2e2e2e;"></div>
<svg style="left:1615px;top:115px" width="10" height="8" fill="#cfcfcf"><path d="M5 0L0 4L5 8Z M10 0L5 4L10 8Z"/></svg>
<svg style="left:1633px;top:114px" width="9" height="9"><path d="M1 1L8 8M8 1L1 8" stroke="#e0e0e0" stroke-width="1.6"/></svg>
<div class="a" style="left:1398px;top:127px;width:250px;height:20px;background:#383838;"></div>
<div class="a" style="left:1399px;top:127px;width:59px;height:20px;background:#4a4a4a;"></div>
<svg style="left:1404px;top:131px" width="6" height="12" fill="#cfcfcf"><path d="M3 0L6 4H0Z M3 12L6 8H0Z"/></svg>
<div class="a t" style="left:1413px;top:131px;font-size:12.5px;color:#e8e8e8;font-weight:bold;">Seiten</div>
<svg style="left:1625px;top:131px" width="19" height="12" fill="#cfcfcf"><path d="M0 4H4L2 6Z"/><rect x="6" y="1" width="12" height="1.5"/><rect x="6" y="4.5" width="12" height="1.5"/><rect x="6" y="8" width="12" height="1.5"/></svg>
<div class="a t" style="left:1402px;top:166px;font-size:10.5px;color:#cfcfcf;">[Ohne]</div>
<div class="a t" style="left:1402px;top:200px;font-size:10.5px;color:#cfcfcf;">A-Musterseite</div>
<div class="a" style="left:1609px;top:152px;width:12px;height:29px;background:#ffffff;"></div>
<div class="a" style="left:1609px;top:187px;width:12px;height:29px;background:#ffffff;"></div>
<div class="a" style="left:1632px;top:147px;width:16px;height:88px;background:#383838;"></div>
<svg style="left:1635px;top:151px" width="10" height="7"><path d="M0 6L5 0L10 6Z" fill="#6a6a6a"/></svg>
<svg style="left:1635px;top:224px" width="10" height="7"><path d="M0 0L5 6L10 0Z" fill="#6a6a6a"/></svg>
<div class="a" style="left:1399px;top:235px;width:249px;height:6px;background:#3b3b3b;"></div>
<div class="a" style="left:1632px;top:241px;width:16px;height:754px;background:#383838;"></div>
<svg style="left:1635px;top:245px" width="10" height="7"><path d="M0 6L5 0L10 6Z" fill="#6a6a6a"/></svg>
<svg style="left:1635px;top:982px" width="10" height="7"><path d="M0 0L5 6L10 0Z" fill="#6a6a6a"/></svg>
<svg style="left:1430px;top:243px" width="12" height="6"><path d="M0 0H12L6 6Z" fill="#8a8a8a"/></svg>
<div class="a" style="left:1418px;top:251px;width:37px;height:88px;background:#2d4660;border:1px solid #7f8f9f;"></div>
<div class="a" style="left:1431px;top:252px;width:10px;height:11px;background:#ffffff;"></div>
<div class="a t" style="left:1432px;top:253px;font-size:10px;color:#111;font-weight:bold;">A</div>
<div class="a" style="left:1428px;top:346px;width:13px;height:14px;background:#4f5e70;"></div>
<div class="a t" style="left:1431px;top:348px;font-size:10px;color:#ffffff;font-weight:bold;">1</div>
<div class="a" style="left:1399px;top:994px;width:249px;height:23px;background:#474747;border-top:1px solid #3e3e3e;"></div>
<div class="a" style="left:1399px;top:1017px;width:249px;height:2px;background:#2a2a2a;"></div>
<div class="a t" style="left:1402px;top:1002px;font-size:10.5px;color:#d0d0d0;">1 Seite auf 1 Druckbogen</div>
<svg style="left:1527px;top:999px" width="22" height="16"><rect x="0" y="5" width="8" height="9" fill="#d0d0d0"/><path d="M8 1H14L17 4V14H8Z" fill="#d0d0d0"/><path d="M11 4L15 8" stroke="#444" stroke-width="1.3"/><path d="M18 12H22L20 14Z" fill="#d0d0d0"/></svg>
<svg style="left:1565px;top:999px" width="16" height="16"><path d="M3 1H15V15H3V10H7V6H3Z" fill="#c8c8c8"/><path d="M1 11L6 11L6 15Z" fill="#c8c8c8"/></svg>
<svg style="left:1601px;top:998px" width="16" height="17" fill="none" stroke="#8a8a8a" stroke-width="1.5"><path d="M1 4H15M6 4V1.5H10V4M3 4L4 16H12L13 4M6.5 6.5V14M9.5 6.5V14"/></svg>
<div class="a" style="left:1399px;top:1019px;width:249px;height:11px;background:#444444;"></div>
<svg style="left:1512px;top:1021px" width="24" height="6"><rect x="0.0" y="0" width="1.3" height="6" fill="#222"/><rect x="2.6" y="0" width="1.3" height="6" fill="#222"/><rect x="5.2" y="0" width="1.3" height="6" fill="#222"/><rect x="7.8" y="0" width="1.3" height="6" fill="#222"/><rect x="10.4" y="0" width="1.3" height="6" fill="#222"/><rect x="13.0" y="0" width="1.3" height="6" fill="#222"/><rect x="15.6" y="0" width="1.3" height="6" fill="#222"/><rect x="18.2" y="0" width="1.3" height="6" fill="#222"/><rect x="20.8" y="0" width="1.3" height="6" fill="#222"/></svg>
<div class="a" style="left:1648px;top:100px;width:24px;height:930px;background:#353535;"></div>
<div class="a" style="left:1652px;top:147px;width:16px;height:669px;background:#939393;"></div>
<div class="a" style="left:1648px;top:100px;width:1px;height:930px;background:#1c1c1c;"></div>
<div class="a" style="left:1668px;top:100px;width:4px;height:930px;background:#262626;"></div>
<svg style="left:1654px;top:131px" width="12" height="9"><path d="M0 9L6 0L12 9Z" fill="#f0f0f0"/></svg>
<svg style="left:1654px;top:1000px" width="12" height="9"><path d="M0 0L6 9L12 0Z" fill="#f0f0f0"/></svg>
<div class="a" style="left:566px;top:70px;width:250px;height:270px;background:#4a4a4a;border:1px solid #2a2a2a;border-top:none;"></div>
<svg style="left:573px;top:73px" width="28" height="25">
<rect x="1" y="1" width="14" height="14" fill="#1f3a52" stroke="#6a6a6a" stroke-width="1.5"/>
<rect x="11" y="10" width="13" height="13" fill="#ffffff"/><rect x="13" y="12" width="9" height="9" fill="#4a4a4a"/>
<path d="M12 22.5L23 11" stroke="#e02020" stroke-width="3.4"/>
<path d="M18 2Q23 2 23 7" fill="none" stroke="#dcdcdc" stroke-width="1.4"/><path d="M16 0.5L19 2.5L16 4.5Z M21 6L23 9.5L25 6Z" fill="#dcdcdc"/></svg>
<svg style="left:612px;top:79px" width="32" height="15"><rect x="1.5" y="1.5" width="11" height="11" fill="#555" stroke="#d6d6d6" stroke-width="1.5"/></svg>
<div class="a t" style="left:630px;top:78px;font-size:16px;color:#9a9a9a;font-family:Liberation Serif,serif;">T</div>
<div class="a t" style="left:680px;top:81px;font-size:11px;color:#cfcfcf;">Farbton:</div>
<div class="a" style="left:726px;top:77px;width:40px;height:15px;background:#a8a8a8;"></div>
<div class="a t" style="left:729px;top:79px;font-size:11px;color:#222;">100</div>
<div class="a" style="left:766px;top:77px;width:13px;height:15px;background:#5a5a5a;"></div>
<svg style="left:769px;top:80px" width="8" height="10"><path d="M0 0L7 4.5L0 9Z" fill="#e0e0e0"/></svg>
<div class="a t" style="left:781px;top:82px;font-size:11px;color:#bdbdbd;">%</div>
<div class="a" style="left:567px;top:120px;width:234px;height:2px;background:#3a3a3a;"></div>
<svg style="left:584px;top:102px" width="17" height="17"><rect x="0" y="0" width="17" height="17" fill="#000"/><rect x="2" y="2" width="13" height="13" fill="#fff"/><path d="M2.5 14.5L14.5 2.5" stroke="#e01818" stroke-width="2.6"/></svg>
<div class="a t" style="left:603px;top:107px;font-size:10.8px;color:#cfcfcf;">[Ohne]</div>
<svg style="left:742px;top:102px" width="16" height="16" fill="none" stroke="#e0e0e0" stroke-width="1.8"><path d="M2 2L14 14M14 2L2 14"/><path d="M10 2L14 6" stroke-width="3"/></svg>
<svg style="left:781px;top:103px" width="15" height="15"><rect x="0" y="0" width="15" height="15" fill="#e6e6e6"/><path d="M1 14L14 1" stroke="#e03030" stroke-width="1.5"/></svg>
<div class="a" style="left:567px;top:144px;width:234px;height:2px;background:#3a3a3a;"></div>
<div class="a" style="left:584px;top:126px;width:17px;height:17px;background:#000;border:2px solid #0a0a0a;"></div>
<div class="a t" style="left:603px;top:131px;font-size:10.8px;color:#cfcfcf;">[Passermarken]</div>
<svg style="left:742px;top:126px" width="16" height="16" fill="none" stroke="#e0e0e0" stroke-width="1.8"><path d="M2 2L14 14M14 2L2 14"/><path d="M10 2L14 6" stroke-width="3"/></svg>
<svg style="left:781px;top:127px" width="15" height="15"><rect x="0" y="0" width="15" height="15" fill="#e6e6e6"/><circle cx="7.5" cy="7.5" r="4" fill="none" stroke="#222" stroke-width="1.4"/><path d="M7.5 1V14M1 7.5H14" stroke="#222" stroke-width="1.2"/></svg>
<div class="a" style="left:567px;top:168px;width:234px;height:2px;background:#3a3a3a;"></div>
<div class="a" style="left:584px;top:150px;width:17px;height:17px;background:#fff;border:2px solid #0a0a0a;"></div>
<div class="a t" style="left:603px;top:155px;font-size:10.8px;color:#cfcfcf;">[Papier]</div>
<div class="a" style="left:567px;top:170px;width:234px;height:24px;background:#4c5b6e;"></div>
<div class="a" style="left:567px;top:192px;width:234px;height:2px;background:#3a3a3a;"></div>
<div class="a" style="left:584px;top:174px;width:17px;height:17px;background:#23364a;border:2px solid #0a0a0a;"></div>
<div class="a t" style="left:603px;top:180px;font-size:11.2px;color:#f4f4f4;font-weight:bold;letter-spacing:0.6px;">C=95 M=70 Y=50 K=50</div>
<svg style="left:761px;top:175px" width="15" height="15"><rect x="0.75" y="0.75" width="13.5" height="13.5" fill="#5a5a5a" stroke="#d0d0d0" stroke-width="1.5"/><rect x="3" y="3" width="9" height="9" fill="#7d7d7d"/></svg>
<svg style="left:781px;top:175px" width="15" height="15"><rect x="0.5" y="0.5" width="14" height="14" fill="#fff" stroke="#ccc"/><path d="M1 1L7.5 7.5L1 14Z" fill="#00c8f0"/><path d="M1 1H14L7.5 7.5Z" fill="#e020c0"/><path d="M14 1V14L7.5 7.5Z" fill="#f0e000"/><path d="M1 14H14L7.5 7.5Z" fill="#000"/></svg>
<div class="a" style="left:567px;top:216px;width:234px;height:2px;background:#3a3a3a;"></div>
<div class="a" style="left:584px;top:198px;width:17px;height:17px;background:#000;border:2px solid #0a0a0a;"></div>
<div class="a t" style="left:603px;top:203px;font-size:10.8px;color:#cfcfcf;">[Schwarz]</div>
<svg style="left:742px;top:198px" width="16" height="16" fill="none" stroke="#e0e0e0" stroke-width="1.8"><path d="M2 2L14 14M14 2L2 14"/><path d="M10 2L14 6" stroke-width="3"/></svg>
<svg style="left:761px;top:199px" width="15" height="15"><rect x="0.75" y="0.75" width="13.5" height="13.5" fill="#5a5a5a" stroke="#d0d0d0" stroke-width="1.5"/><rect x="3" y="3" width="9" height="9" fill="#7d7d7d"/></svg>
<svg style="left:781px;top:199px" width="15" height="15"><rect x="0.5" y="0.5" width="14" height="14" fill="#fff" stroke="#ccc"/><path d="M1 1L7.5 7.5L1 14Z" fill="#00c8f0"/><path d="M1 1H14L7.5 7.5Z" fill="#e020c0"/><path d="M14 1V14L7.5 7.5Z" fill="#f0e000"/><path d="M1 14H14L7.5 7.5Z" fill="#000"/></svg>
<div class="a" style="left:567px;top:240px;width:234px;height:2px;background:#3a3a3a;"></div>
<div class="a" style="left:584px;top:222px;width:17px;height:17px;background:#e8821e;border:2px solid #0a0a0a;"></div>
<div class="a t" style="left:603px;top:227px;font-size:10.8px;color:#cfcfcf;">bleed area</div>
<svg style="left:761px;top:223px" width="15" height="15"><rect x="0.75" y="0.75" width="13.5" height="13.5" fill="#5a5a5a" stroke="#d0d0d0" stroke-width="1.5"/><rect x="3" y="3" width="9" height="9" fill="#6a6a6a"/><rect x="5" y="5" width="5" height="5" fill="#aaa"/></svg>
<svg style="left:781px;top:223px" width="15" height="15"><rect x="0.5" y="0.5" width="14" height="14" fill="#fff" stroke="#ccc"/><path d="M1 1L7.5 7.5L1 14Z" fill="#00c8f0"/><path d="M1 1H14L7.5 7.5Z" fill="#e020c0"/><path d="M14 1V14L7.5 7.5Z" fill="#f0e000"/><path d="M1 14H14L7.5 7.5Z" fill="#000"/></svg>
<div class="a" style="left:567px;top:264px;width:234px;height:2px;background:#3a3a3a;"></div>
<div class="a" style="left:584px;top:246px;width:17px;height:17px;background:#c2c2bb;border:2px solid #0a0a0a;"></div>
<div class="a t" style="left:603px;top:251px;font-size:10.8px;color:#cfcfcf;">safety distance</div>
<svg style="left:761px;top:247px" width="15" height="15"><rect x="0.75" y="0.75" width="13.5" height="13.5" fill="#5a5a5a" stroke="#d0d0d0" stroke-width="1.5"/><rect x="3" y="3" width="9" height="9" fill="#6a6a6a"/><rect x="5" y="5" width="5" height="5" fill="#aaa"/></svg>
<svg style="left:781px;top:247px" width="15" height="15"><rect x="0.5" y="0.5" width="14" height="14" fill="#fff" stroke="#ccc"/><path d="M1 1L7.5 7.5L1 14Z" fill="#00c8f0"/><path d="M1 1H14L7.5 7.5Z" fill="#e020c0"/><path d="M14 1V14L7.5 7.5Z" fill="#f0e000"/><path d="M1 14H14L7.5 7.5Z" fill="#000"/></svg>
<div class="a" style="left:567px;top:288px;width:234px;height:2px;background:#3a3a3a;"></div>
<div class="a" style="left:584px;top:270px;width:17px;height:17px;background:#3c3f3a;border:2px solid #0a0a0a;"></div>
<div class="a t" style="left:603px;top:275px;font-size:10.8px;color:#cfcfcf;">infos</div>
<svg style="left:761px;top:271px" width="15" height="15"><rect x="0.75" y="0.75" width="13.5" height="13.5" fill="#5a5a5a" stroke="#d0d0d0" stroke-width="1.5"/><rect x="3" y="3" width="9" height="9" fill="#6a6a6a"/><rect x="5" y="5" width="5" height="5" fill="#aaa"/></svg>
<svg style="left:781px;top:271px" width="15" height="15"><rect x="0.5" y="0.5" width="14" height="14" fill="#fff" stroke="#ccc"/><path d="M1 1L7.5 7.5L1 14Z" fill="#00c8f0"/><path d="M1 1H14L7.5 7.5Z" fill="#e020c0"/><path d="M14 1V14L7.5 7.5Z" fill="#f0e000"/><path d="M1 14H14L7.5 7.5Z" fill="#000"/></svg>
<div class="a" style="left:567px;top:314px;width:234px;height:2px;background:#3a3a3a;"></div>
<div class="a" style="left:801px;top:98px;width:15px;height:219px;background:#383838;"></div>
<svg style="left:803px;top:104px" width="11" height="7"><path d="M0 6L5.5 0L11 6Z" fill="#5f5f5f"/></svg>
<svg style="left:803px;top:305px" width="11" height="7"><path d="M0 0L5.5 6L11 0Z" fill="#5f5f5f"/></svg>
<svg style="left:659px;top:321px" width="24" height="17"><rect x="1" y="1" width="15" height="13" fill="#e8e8e8"/><path d="M6 1V14M11 1V14M1 5.5H16M1 10H16" stroke="#333" stroke-width="1"/><rect x="11.5" y="6" width="4" height="3.5" fill="#111"/><rect x="1.5" y="10.5" width="4" height="3.5" fill="#111"/><path d="M18 13H22L20 15Z" fill="#ddd"/></svg>
<svg style="left:698px;top:322px" width="17" height="14"><path d="M0 2H6L8 4H16V13H0Z" fill="#c8c8c8"/></svg>
<svg style="left:734px;top:321px" width="16" height="16"><path d="M3 1H15V15H3V10H7V6H3Z" fill="#c8c8c8"/><path d="M1 11L6 11L6 15Z" fill="#c8c8c8"/></svg>
<svg style="left:771px;top:320px" width="16" height="17" fill="none" stroke="#d0d0d0" stroke-width="1.5"><path d="M1 4H15M6 4V1.5H10V4M3 4L4 16H12L13 4M6.5 6.5V14M9.5 6.5V14"/></svg>
<div class="a" style="left:816px;top:73px;width:284px;height:467px;background:#f0f0f0;border:1px solid #979797;box-shadow:2px 2px 2px rgba(0,0,0,0.45);"></div>
<div class="a" style="left:817px;top:74px;width:1px;height:465px;background:#ffffff;"></div>
<div class="a" style="left:842px;top:75px;width:1px;height:463px;background:#e2e3e3;"></div>
<div class="a" style="left:843px;top:75px;width:1px;height:463px;background:#ffffff;"></div>
<div class="a" style="left:823px;top:75px;width:275px;height:20px;background:#d3e4f4;border:1px solid #b3cde6;"></div>
<div class="a t" style="left:846px;top:80px;font-size:12px;color:#1e1e1e;">Neues Farbfeld<span style="letter-spacing:-1.4px">...</span></div>
<div class="a t" style="left:846px;top:99px;font-size:12px;color:#1e1e1e;">Neues Farbtonfeld<span style="letter-spacing:-1.4px">...</span></div>
<div class="a t" style="left:846px;top:118px;font-size:12px;color:#1e1e1e;">Neues Verlaufsfeld<span style="letter-spacing:-1.4px">...</span></div>
<div class="a t" style="left:846px;top:138px;font-size:12px;color:#1e1e1e;">Neues Mischdruckfarben-Farbfeld<span style="letter-spacing:-1.4px">...</span></div>
<div class="a t" style="left:846px;top:157px;font-size:12px;color:#1e1e1e;">Neue Mischdruckfarben-Gruppe<span style="letter-spacing:-1.4px">...</span></div>
<div class="a t" style="left:846px;top:176px;font-size:12px;color:#1e1e1e;">Neue Farbgruppe<span style="letter-spacing:-1.4px">...</span></div>
<div class="a t" style="left:846px;top:196px;font-size:12px;color:#1e1e1e;">Farbfeld duplizieren</div>
<div class="a t" style="left:846px;top:215px;font-size:12px;color:#1e1e1e;">Farbfeld löschen<span style="letter-spacing:-1.4px">...</span></div>
<div class="a t" style="left:846px;top:234px;font-size:12px;color:#8f8f8f;">Gruppierung von Farbgruppe aufheben</div>
<div class="a t" style="left:846px;top:259px;font-size:12px;color:#1e1e1e;">Farbfeldoptionen<span style="letter-spacing:-1.4px">...</span></div>
<div class="a t" style="left:846px;top:278px;font-size:12px;color:#8f8f8f;">Farbgruppenoptionen<span style="letter-spacing:-1.4px">...</span></div>
<div class="a t" style="left:846px;top:302px;font-size:12px;color:#1e1e1e;">Farbfelder laden<span style="letter-spacing:-1.4px">...</span></div>
<div class="a t" style="left:846px;top:322px;font-size:12px;color:#1e1e1e;">Farbfelder speichern<span style="letter-spacing:-1.4px">...</span></div>
<div class="a t" style="left:846px;top:346px;font-size:12px;color:#1e1e1e;">Alle nicht verwendeten auswählen</div>
<div class="a t" style="left:846px;top:365px;font-size:12px;color:#1e1e1e;">Unbenannte Farben hinzufügen</div>
<div class="a t" style="left:846px;top:390px;font-size:12px;color:#1e1e1e;">Name</div>
<div class="a t" style="left:846px;top:409px;font-size:12px;color:#1e1e1e;">Name (klein)</div>
<div class="a t" style="left:846px;top:428px;font-size:12px;color:#1e1e1e;">Kleines Farbfeld</div>
<div class="a t" style="left:846px;top:448px;font-size:12px;color:#1e1e1e;">Großes Farbfeld</div>
<div class="a t" style="left:846px;top:473px;font-size:12px;color:#8f8f8f;">Farbfelder zusammenführen</div>
<div class="a t" style="left:846px;top:498px;font-size:12px;color:#1e1e1e;">Druckfarben-Manager<span style="letter-spacing:-1.4px">...</span></div>
<div class="a t" style="left:846px;top:522px;font-size:12px;color:#1e1e1e;">Optionen ausblenden</div>
<div class="a" style="left:846px;top:251px;width:251px;height:1px;background:#d7d7d7;"></div>
<div class="a" style="left:846px;top:252px;width:251px;height:1px;background:#ffffff;"></div>
<div class="a" style="left:846px;top:295px;width:251px;height:1px;background:#d7d7d7;"></div>
<div class="a" style="left:846px;top:296px;width:251px;height:1px;background:#ffffff;"></div>
<div class="a" style="left:846px;top:339px;width:251px;height:1px;background:#d7d7d7;"></div>
<div class="a" style="left:846px;top:340px;width:251px;height:1px;background:#ffffff;"></div>
<div class="a" style="left:846px;top:383px;width:251px;height:1px;background:#d7d7d7;"></div>
<div class="a" style="left:846px;top:384px;width:251px;height:1px;background:#ffffff;"></div>
<div class="a" style="left:846px;top:466px;width:251px;height:1px;background:#d7d7d7;"></div>
<div class="a" style="left:846px;top:467px;width:251px;height:1px;background:#ffffff;"></div>
<div class="a" style="left:846px;top:490px;width:251px;height:1px;background:#d7d7d7;"></div>
<div class="a" style="left:846px;top:491px;width:251px;height:1px;background:#ffffff;"></div>
<div class="a" style="left:846px;top:515px;width:251px;height:1px;background:#d7d7d7;"></div>
<div class="a" style="left:846px;top:516px;width:251px;height:1px;background:#ffffff;"></div>
<div class="a" style="left:819px;top:387px;width:19px;height:19px;background:#c9e0f4;border:1px solid #9cc6ea;"></div>
<svg style="left:822px;top:391px" width="12" height="11"><path d="M1.5 5.5L4.5 8.5L10.5 1.5" fill="none" stroke="#1a1a1a" stroke-width="2.2"/></svg>
<div class="a" style="left:1672px;top:100px;width:248px;height:16px;background:#333333;"></div>
<svg style="left:1904px;top:104px" width="10" height="8" fill="#c0c0c0"><path d="M0 0L4 3.5L0 7Z M5 0L9 3.5L5 7Z"/></svg>
<div class="a" style="left:1672px;top:116px;width:248px;height:18px;background:#383838;"></div>
<div class="a" style="left:1670px;top:116px;width:2px;height:914px;background:#262626;"></div>
<div class="a t" style="left:1680px;top:120px;font-size:12px;color:#9c9c9c;font-weight:bold;">Verknüpfungen</div>
<div class="a" style="left:1777px;top:116px;width:64px;height:18px;background:#4a4a4a;"></div>
<svg style="left:1782px;top:119px" width="6" height="12" fill="#cfcfcf"><path d="M3 0L6 4H0Z M3 12L6 8H0Z"/></svg>
<div class="a t" style="left:1792px;top:119px;font-size:12.5px;color:#ececec;font-weight:bold;">Ebenen</div>
<svg style="left:1898px;top:121px" width="19" height="12" fill="#cfcfcf"><path d="M0 4H4L2 6Z"/><rect x="6" y="1" width="12" height="1.5"/><rect x="6" y="4.5" width="12" height="1.5"/><rect x="6" y="8" width="12" height="1.5"/></svg>
<div class="a" style="left:1672px;top:134px;width:248px;height:164px;background:#484848;"></div>
<div class="a" style="left:1904px;top:134px;width:16px;height:164px;background:#373737;"></div>
<svg style="left:1907px;top:144px" width="10" height="7"><path d="M0 6L5 0L10 6Z" fill="#6a6a6a"/></svg>
<svg style="left:1907px;top:286px" width="10" height="7"><path d="M0 0L5 6L10 0Z" fill="#6a6a6a"/></svg>
<div class="a" style="left:1672px;top:138px;width:232px;height:22px;background:#4c5b6e;"></div>
<div class="a" style="left:1672px;top:160px;width:232px;height:1px;background:#3a3a3a;"></div>
<div class="a" style="left:1672px;top:182px;width:232px;height:1px;background:#3a3a3a;"></div>
<div class="a" style="left:1672px;top:206px;width:232px;height:1px;background:#3a3a3a;"></div>
<div class="a" style="left:1695px;top:138px;width:1px;height:68px;background:#3a3a3a;"></div>
<svg style="left:1676px;top:143px" width="16" height="12"><path d="M1 6Q8 -1 15 6Q8 13 1 6Z" fill="none" stroke="#d8d8d8" stroke-width="1.6"/><circle cx="8" cy="6" r="2.8" fill="#d8d8d8"/><circle cx="7" cy="5" r="1" fill="#444"/></svg>
<svg style="left:1676px;top:166px" width="16" height="12"><path d="M1 6Q8 -1 15 6Q8 13 1 6Z" fill="none" stroke="#d8d8d8" stroke-width="1.6"/><circle cx="8" cy="6" r="2.8" fill="#d8d8d8"/><circle cx="7" cy="5" r="1" fill="#444"/></svg>
<svg style="left:1676px;top:190px" width="16" height="12"><path d="M1 6Q8 -1 15 6Q8 13 1 6Z" fill="none" stroke="#d8d8d8" stroke-width="1.6"/><circle cx="8" cy="6" r="2.8" fill="#d8d8d8"/><circle cx="7" cy="5" r="1" fill="#444"/></svg>
<div class="a" style="left:1717px;top:141px;width:5px;height:18px;background:#3cd43c;"></div>
<div class="a" style="left:1717px;top:163px;width:5px;height:18px;background:#3cd43c;"></div>
<div class="a" style="left:1717px;top:186px;width:5px;height:18px;background:#e8782a;"></div>
<svg style="left:1726px;top:147px" width="10" height="6"><path d="M0 0H10L5 6Z" fill="#d8d8d8"/></svg>
<div class="a t" style="left:1739px;top:146px;font-size:11.2px;color:#ffffff;font-weight:bold;">Meine Ebene</div>
<svg style="left:1862px;top:141px" width="16" height="17"><path d="M10 1L15 6L12 9L11 14L3 16L1 14L3 6L8 5Z" fill="#c8c8c8"/><path d="M1 15L7 9" stroke="#4c5b6e" stroke-width="1.2"/></svg>
<div class="a" style="left:1889px;top:145px;width:9px;height:9px;background:#3ce03c;border:1.5px solid #111;"></div>
<div class="a t" style="left:1753px;top:169px;font-size:10.5px;color:#c8c8c8;">&lt;Rechteck&gt;</div>
<div class="a" style="left:1889px;top:168px;width:9px;height:9px;background:#3ce03c;border:1.5px solid #111;"></div>
<svg style="left:1701px;top:189px" width="11" height="13"><path d="M2.5 6V4A3 3 0 0 1 8.5 4V6" fill="none" stroke="#cfcfcf" stroke-width="1.6"/><rect x="1" y="6" width="9" height="7" fill="#cfcfcf"/></svg>
<svg style="left:1728px;top:190px" width="6" height="10"><path d="M0 0L6 5L0 10Z" fill="#d8d8d8"/></svg>
<div class="a t" style="left:1739px;top:192px;font-size:11px;color:#cfcfcf;">Vorlage</div>
<div class="a" style="left:1888px;top:191px;width:10px;height:10px;border:1.5px solid #333;"></div>
<div class="a" style="left:1664px;top:132px;width:241px;height:55px;border:5px solid #f00d0d;"></div>
<div class="a" style="left:1672px;top:298px;width:248px;height:20px;background:#474747;border-top:1px solid #3a3a3a;"></div>
<div class="a t" style="left:1677px;top:304px;font-size:10.5px;color:#d0d0d0;">Seite: 1, 2 Ebenen</div>
<svg style="left:1840px;top:301px" width="16" height="14"><path d="M3 0H14V13H3V9H7V5H3Z" fill="#c8c8c8"/><path d="M1 10H6V13Z" fill="#c8c8c8"/></svg>
<svg style="left:1877px;top:300px" width="16" height="16" fill="none" stroke="#d0d0d0" stroke-width="1.5"><path d="M1 4H15M6 4V1.5H10V4M3 4L4 15H12L13 4M6.5 6.5V13M9.5 6.5V13"/></svg>
<div class="a" style="left:1672px;top:318px;width:248px;height:3px;background:#2e2e2e;"></div>
<div class="a" style="left:1672px;top:321px;width:248px;height:21px;background:#383838;"></div>
<div class="a t" style="left:1680px;top:326px;font-size:12px;color:#9c9c9c;font-weight:bold;">Kontur</div>
<div class="a" style="left:1731px;top:321px;width:82px;height:21px;background:#4a4a4a;"></div>
<svg style="left:1736px;top:325px" width="6" height="12" fill="#cfcfcf"><path d="M3 0L6 4H0Z M3 12L6 8H0Z"/></svg>
<div class="a t" style="left:1746px;top:325px;font-size:12.5px;color:#ececec;font-weight:bold;">Farbfelder</div>
<div class="a t" style="left:1821px;top:326px;font-size:12px;color:#9c9c9c;font-weight:bold;">Verlauf</div>
<svg style="left:1898px;top:326px" width="19" height="12" fill="#cfcfcf"><path d="M0 4H4L2 6Z"/><rect x="6" y="1" width="12" height="1.5"/><rect x="6" y="4.5" width="12" height="1.5"/><rect x="6" y="8" width="12" height="1.5"/></svg>
<div class="a" style="left:1672px;top:342px;width:248px;height:415px;background:#484848;"></div>
<svg style="left:1677px;top:345px" width="28" height="25">
<rect x="1" y="1" width="14" height="14" fill="#1f3a52" stroke="#6a6a6a" stroke-width="1.5"/>
<rect x="11" y="10" width="13" height="13" fill="#ffffff"/><rect x="13" y="12" width="9" height="9" fill="#4a4a4a"/>
<path d="M12 22.5L23 11" stroke="#e02020" stroke-width="3.4"/>
<path d="M18 2Q23 2 23 7" fill="none" stroke="#dcdcdc" stroke-width="1.4"/><path d="M16 0.5L19 2.5L16 4.5Z M21 6L23 9.5L25 6Z" fill="#dcdcdc"/></svg>
<svg style="left:1717px;top:350px" width="14" height="14"><rect x="1.5" y="1.5" width="11" height="11" fill="#555" stroke="#d6d6d6" stroke-width="1.5"/></svg>
<div class="a t" style="left:1735px;top:349px;font-size:15px;color:#9a9a9a;font-family:Liberation Serif,serif;">T</div>
<div class="a t" style="left:1786px;top:353px;font-size:10.5px;color:#cfcfcf;">Farbton:</div>
<div class="a" style="left:1831px;top:350px;width:34px;height:14px;background:#a8a8a8;"></div>
<div class="a t" style="left:1833px;top:351px;font-size:10.5px;color:#222;">100</div>
<div class="a" style="left:1866px;top:350px;width:13px;height:14px;background:#5a5a5a;"></div>
<svg style="left:1870px;top:353px" width="7" height="9"><path d="M0 0L7 4.5L0 9Z" fill="#e0e0e0"/></svg>
<div class="a t" style="left:1885px;top:354px;font-size:10.5px;color:#bdbdbd;">%</div>
<div class="a" style="left:1672px;top:395px;width:232px;height:2px;background:#3a3a3a;"></div>
<svg style="left:1689px;top:377px" width="17" height="17"><rect x="0" y="0" width="17" height="17" fill="#000"/><rect x="2" y="2" width="13" height="13" fill="#fff"/><path d="M2.5 14.5L14.5 2.5" stroke="#e01818" stroke-width="2.6"/></svg>
<div class="a t" style="left:1708px;top:381px;font-size:10.7px;color:#cfcfcf;">[Ohne]</div>
<svg style="left:1847px;top:377px" width="16" height="16" fill="none" stroke="#e0e0e0" stroke-width="1.8"><path d="M2 2L14 14M14 2L2 14"/><path d="M10 2L14 6" stroke-width="3"/></svg>
<svg style="left:1886px;top:378px" width="15" height="15"><rect x="0" y="0" width="15" height="15" fill="#e6e6e6"/><path d="M1 14L14 1" stroke="#e03030" stroke-width="1.5"/></svg>
<div class="a" style="left:1672px;top:419px;width:232px;height:2px;background:#3a3a3a;"></div>
<div class="a" style="left:1689px;top:401px;width:17px;height:17px;background:#000;border:2px solid #0a0a0a;"></div>
<div class="a t" style="left:1708px;top:405px;font-size:10.7px;color:#cfcfcf;">[Passermarken]</div>
<svg style="left:1847px;top:401px" width="16" height="16" fill="none" stroke="#e0e0e0" stroke-width="1.8"><path d="M2 2L14 14M14 2L2 14"/><path d="M10 2L14 6" stroke-width="3"/></svg>
<svg style="left:1886px;top:402px" width="15" height="15"><rect x="0" y="0" width="15" height="15" fill="#e6e6e6"/><circle cx="7.5" cy="7.5" r="4" fill="none" stroke="#222" stroke-width="1.4"/><path d="M7.5 1V14M1 7.5H14" stroke="#222" stroke-width="1.2"/></svg>
<div class="a" style="left:1672px;top:443px;width:232px;height:2px;background:#3a3a3a;"></div>
<div class="a" style="left:1689px;top:425px;width:17px;height:17px;background:#fff;border:2px solid #0a0a0a;"></div>
<div class="a t" style="left:1708px;top:429px;font-size:10.7px;color:#cfcfcf;">[Papier]</div>
<div class="a" style="left:1672px;top:445px;width:232px;height:24px;background:#4c5b6e;"></div>
<div class="a" style="left:1672px;top:467px;width:232px;height:2px;background:#3a3a3a;"></div>
<div class="a" style="left:1689px;top:449px;width:17px;height:17px;background:#23364a;border:2px solid #0a0a0a;"></div>
<div class="a t" style="left:1708px;top:454px;font-size:10.8px;color:#f4f4f4;font-weight:bold;letter-spacing:0.8px;">C=95 M=70 Y=50 K=50</div>
<svg style="left:1866px;top:450px" width="15" height="15"><rect x="0.75" y="0.75" width="13.5" height="13.5" fill="#5a5a5a" stroke="#d0d0d0" stroke-width="1.5"/><rect x="3" y="3" width="9" height="9" fill="#7d7d7d"/></svg>
<svg style="left:1886px;top:450px" width="15" height="15"><rect x="0.5" y="0.5" width="14" height="14" fill="#fff" stroke="#ccc"/><path d="M1 1L7.5 7.5L1 14Z" fill="#00c8f0"/><path d="M1 1H14L7.5 7.5Z" fill="#e020c0"/><path d="M14 1V14L7.5 7.5Z" fill="#f0e000"/><path d="M1 14H14L7.5 7.5Z" fill="#000"/></svg>
<div class="a" style="left:1672px;top:491px;width:232px;height:2px;background:#3a3a3a;"></div>
<div class="a" style="left:1689px;top:473px;width:17px;height:17px;background:#000;border:2px solid #0a0a0a;"></div>
<div class="a t" style="left:1708px;top:477px;font-size:10.7px;color:#cfcfcf;">[Schwarz]</div>
<svg style="left:1847px;top:473px" width="16" height="16" fill="none" stroke="#e0e0e0" stroke-width="1.8"><path d="M2 2L14 14M14 2L2 14"/><path d="M10 2L14 6" stroke-width="3"/></svg>
<svg style="left:1866px;top:474px" width="15" height="15"><rect x="0.75" y="0.75" width="13.5" height="13.5" fill="#5a5a5a" stroke="#d0d0d0" stroke-width="1.5"/><rect x="3" y="3" width="9" height="9" fill="#7d7d7d"/></svg>
<svg style="left:1886px;top:474px" width="15" height="15"><rect x="0.5" y="0.5" width="14" height="14" fill="#fff" stroke="#ccc"/><path d="M1 1L7.5 7.5L1 14Z" fill="#00c8f0"/><path d="M1 1H14L7.5 7.5Z" fill="#e020c0"/><path d="M14 1V14L7.5 7.5Z" fill="#f0e000"/><path d="M1 14H14L7.5 7.5Z" fill="#000"/></svg>
<div class="a" style="left:1672px;top:515px;width:232px;height:2px;background:#3a3a3a;"></div>
<div class="a" style="left:1689px;top:497px;width:17px;height:17px;background:#e8821e;border:2px solid #0a0a0a;"></div>
<div class="a t" style="left:1708px;top:501px;font-size:10.7px;color:#cfcfcf;">bleed area</div>
<svg style="left:1866px;top:498px" width="15" height="15"><rect x="0.75" y="0.75" width="13.5" height="13.5" fill="#5a5a5a" stroke="#d0d0d0" stroke-width="1.5"/><rect x="3" y="3" width="9" height="9" fill="#6a6a6a"/><rect x="5" y="5" width="5" height="5" fill="#aaa"/></svg>
<svg style="left:1886px;top:498px" width="15" height="15"><rect x="0.5" y="0.5" width="14" height="14" fill="#fff" stroke="#ccc"/><path d="M1 1L7.5 7.5L1 14Z" fill="#00c8f0"/><path d="M1 1H14L7.5 7.5Z" fill="#e020c0"/><path d="M14 1V14L7.5 7.5Z" fill="#f0e000"/><path d="M1 14H14L7.5 7.5Z" fill="#000"/></svg>
<div class="a" style="left:1672px;top:539px;width:232px;height:2px;background:#3a3a3a;"></div>
<div class="a" style="left:1689px;top:521px;width:17px;height:17px;background:#c2c2bb;border:2px solid #0a0a0a;"></div>
<div class="a t" style="left:1708px;top:525px;font-size:10.7px;color:#cfcfcf;">safety distance</div>
<svg style="left:1866px;top:522px" width="15" height="15"><rect x="0.75" y="0.75" width="13.5" height="13.5" fill="#5a5a5a" stroke="#d0d0d0" stroke-width="1.5"/><rect x="3" y="3" width="9" height="9" fill="#6a6a6a"/><rect x="5" y="5" width="5" height="5" fill="#aaa"/></svg>
<svg style="left:1886px;top:522px" width="15" height="15"><rect x="0.5" y="0.5" width="14" height="14" fill="#fff" stroke="#ccc"/><path d="M1 1L7.5 7.5L1 14Z" fill="#00c8f0"/><path d="M1 1H14L7.5 7.5Z" fill="#e020c0"/><path d="M14 1V14L7.5 7.5Z" fill="#f0e000"/><path d="M1 14H14L7.5 7.5Z" fill="#000"/></svg>
<div class="a" style="left:1672px;top:563px;width:232px;height:2px;background:#3a3a3a;"></div>
<div class="a" style="left:1689px;top:545px;width:17px;height:17px;background:#3c3f3a;border:2px solid #0a0a0a;"></div>
<div class="a t" style="left:1708px;top:549px;font-size:10.7px;color:#cfcfcf;">infos</div>
<svg style="left:1866px;top:546px" width="15" height="15"><rect x="0.75" y="0.75" width="13.5" height="13.5" fill="#5a5a5a" stroke="#d0d0d0" stroke-width="1.5"/><rect x="3" y="3" width="9" height="9" fill="#6a6a6a"/><rect x="5" y="5" width="5" height="5" fill="#aaa"/></svg>
<svg style="left:1886px;top:546px" width="15" height="15"><rect x="0.5" y="0.5" width="14" height="14" fill="#fff" stroke="#ccc"/><path d="M1 1L7.5 7.5L1 14Z" fill="#00c8f0"/><path d="M1 1H14L7.5 7.5Z" fill="#e020c0"/><path d="M14 1V14L7.5 7.5Z" fill="#f0e000"/><path d="M1 14H14L7.5 7.5Z" fill="#000"/></svg>
<div class="a" style="left:1672px;top:371px;width:232px;height:2px;background:#3a3a3a;"></div>
<div class="a" style="left:1904px;top:371px;width:16px;height:362px;background:#373737;"></div>
<svg style="left:1907px;top:377px" width="10" height="7"><path d="M0 6L5 0L10 6Z" fill="#6a6a6a"/></svg>
<svg style="left:1907px;top:720px" width="10" height="7"><path d="M0 0L5 6L10 0Z" fill="#6a6a6a"/></svg>
<div class="a" style="left:1672px;top:733px;width:248px;height:24px;background:#474747;border-top:2px solid #3a3a3a;"></div>
<svg style="left:1765px;top:738px" width="24" height="17"><rect x="1" y="1" width="15" height="13" fill="#e8e8e8"/><path d="M6 1V14M11 1V14M1 5.5H16M1 10H16" stroke="#333" stroke-width="1"/><rect x="11.5" y="6" width="4" height="3.5" fill="#111"/><rect x="1.5" y="10.5" width="4" height="3.5" fill="#111"/><path d="M18 13H22L20 15Z" fill="#ddd"/></svg>
<svg style="left:1803px;top:739px" width="17" height="14"><path d="M0 2H6L8 4H16V13H0Z" fill="#c8c8c8"/></svg>
<svg style="left:1840px;top:738px" width="16" height="16"><path d="M3 1H15V15H3V10H7V6H3Z" fill="#c8c8c8"/><path d="M1 11L6 11L6 15Z" fill="#c8c8c8"/></svg>
<svg style="left:1876px;top:737px" width="16" height="17" fill="none" stroke="#d0d0d0" stroke-width="1.5"><path d="M1 4H15M6 4V1.5H10V4M3 4L4 16H12L13 4M6.5 6.5V14M9.5 6.5V14"/></svg>
<div class="a" style="left:1672px;top:757px;width:248px;height:2px;background:#2e2e2e;"></div>
<div class="a" style="left:1672px;top:759px;width:248px;height:21px;background:#383838;"></div>
<div class="a t" style="left:1680px;top:764px;font-size:12px;color:#9c9c9c;font-weight:bold;">Effekte</div>
<div class="a" style="left:1727px;top:759px;width:1px;height:21px;background:#333;"></div>
<div class="a t" style="left:1734px;top:764px;font-size:12px;color:#9c9c9c;font-weight:bold;">Ausrichten</div>
<div class="a" style="left:1800px;top:759px;width:73px;height:21px;background:#4a4a4a;"></div>
<div class="a t" style="left:1806px;top:764px;font-size:12.5px;color:#ececec;font-weight:bold;">Pathfinder</div>
<div class="a" style="left:1672px;top:780px;width:248px;height:225px;background:#4a4a4a;"></div>
<div class="a t" style="left:1677px;top:789px;font-size:10.5px;color:#cfcfcf;">Pfade:</div>
<div class="a t" style="left:1677px;top:837px;font-size:10.5px;color:#cfcfcf;">Pathfinder:</div>
<div class="a t" style="left:1677px;top:885px;font-size:10.5px;color:#cfcfcf;">Form konvertieren:</div>
<div class="a t" style="left:1677px;top:962px;font-size:10.5px;color:#cfcfcf;">Punkt konvertieren:</div>
<div class="a" style="left:1680px;top:830px;width:236px;height:1px;background:#3c3c3c;"></div>
<div class="a" style="left:1680px;top:831px;width:236px;height:1px;background:#555;"></div>
<div class="a" style="left:1680px;top:878px;width:236px;height:1px;background:#3c3c3c;"></div>
<div class="a" style="left:1680px;top:879px;width:236px;height:1px;background:#555;"></div>
<div class="a" style="left:1680px;top:955px;width:236px;height:1px;background:#3c3c3c;"></div>
<div class="a" style="left:1680px;top:956px;width:236px;height:1px;background:#555;"></div>
<svg style="left:1683px;top:805px" width="20" height="20"><path d="M2 14Q5 5 14 3" fill="none" stroke="#d0d0d0" stroke-width="1.3" stroke-dasharray="2 1.6"/><rect x="1" y="12" width="4" height="4" fill="#d0d0d0"/><rect x="13" y="1" width="4" height="4" fill="#d0d0d0"/></svg>
<svg style="left:1733px;top:805px" width="20" height="20"><ellipse cx="9" cy="10" rx="8" ry="6" fill="none" stroke="#d0d0d0" stroke-width="1.3"/><path d="M9 9L16 2" fill="none" stroke="#d0d0d0" stroke-width="1.3" stroke-width="1.8"/></svg>
<svg style="left:1783px;top:805px" width="20" height="20"><ellipse cx="10" cy="10" rx="9" ry="6" fill="none" stroke="#d0d0d0" stroke-width="1.3" stroke-width="1.8"/><circle cx="5" cy="5" r="1.8" fill="#d0d0d0"/><circle cx="16" cy="13" r="1.8" fill="#d0d0d0"/></svg>
<svg style="left:1833px;top:805px" width="20" height="20"><path d="M1 3H5M14 3H18V17H14M5 17H1V3" fill="none" stroke="#d0d0d0" stroke-width="1.3"/><path d="M9 2V18M6 5L9 2L12 5" fill="none" stroke="#d0d0d0" stroke-width="1.3"/><circle cx="9" cy="10" r="1.5" fill="#d0d0d0"/></svg>
<svg style="left:1683px;top:853px" width="19" height="19"><rect x="1" y="1" width="11" height="11" fill="#8a8a8a" stroke="#d0d0d0" stroke-width="1.3"/><rect x="6" y="6" width="11" height="11" fill="#8a8a8a" stroke="#d0d0d0" stroke-width="1.3"/><rect x="6" y="6" width="6" height="6" fill="#8a8a8a"/></svg>
<svg style="left:1733px;top:853px" width="19" height="19"><rect x="1" y="1" width="11" height="11" fill="none" stroke="#d0d0d0" stroke-width="1.3"/><rect x="6" y="6" width="11" height="11" fill="#8a8a8a" stroke="#d0d0d0" stroke-width="1.3"/></svg>
<svg style="left:1783px;top:853px" width="19" height="19"><rect x="1" y="1" width="11" height="11" fill="none" stroke="#d0d0d0" stroke-width="1.3"/><rect x="6" y="6" width="11" height="11" fill="none" stroke="#d0d0d0" stroke-width="1.3"/><rect x="6" y="6" width="6" height="6" fill="#c8c8c8"/></svg>
<svg style="left:1833px;top:853px" width="19" height="19"><rect x="1" y="1" width="11" height="11" fill="#8a8a8a" stroke="#d0d0d0" stroke-width="1.3"/><rect x="6" y="6" width="11" height="11" fill="#8a8a8a" stroke="#d0d0d0" stroke-width="1.3"/><rect x="6" y="6" width="6" height="6" fill="#222"/></svg>
<svg style="left:1883px;top:853px" width="19" height="19"><rect x="1" y="1" width="11" height="11" fill="none" stroke="#d0d0d0" stroke-width="1.3"/><path d="M12 6H17V17H6V12H12Z" fill="#8a8a8a" stroke="#d0d0d0" stroke-width="1.3"/></svg>
<svg style="left:1683px;top:903px" width="20" height="18"><rect x="1" y="2" width="16" height="13" fill="none" stroke="#d0d0d0" stroke-width="1.3"/></svg>
<svg style="left:1733px;top:903px" width="20" height="18"><rect x="1" y="2" width="16" height="13" rx="3" fill="none" stroke="#d0d0d0" stroke-width="1.3"/></svg>
<svg style="left:1783px;top:903px" width="20" height="18"><ellipse cx="9" cy="8.5" rx="8" ry="7" fill="none" stroke="#d0d0d0" stroke-width="1.3"/></svg>
<svg style="left:1833px;top:903px" width="20" height="18"><path d="M4 2H14Q14 5 17 5V12Q14 12 14 15H4Q4 12 1 12V5Q4 5 4 2Z" fill="none" stroke="#d0d0d0" stroke-width="1.3"/></svg>
<svg style="left:1883px;top:903px" width="20" height="18"><ellipse cx="9" cy="8.5" rx="8.5" ry="6" fill="none" stroke="#d0d0d0" stroke-width="1.3"/></svg>
<svg style="left:1683px;top:931px" width="20" height="18"><path d="M9 2L17 15H1Z" fill="none" stroke="#d0d0d0" stroke-width="1.3"/></svg>
<svg style="left:1733px;top:931px" width="20" height="18"><path d="M5 2H13L17 8.5L13 15H5L1 8.5Z" fill="none" stroke="#d0d0d0" stroke-width="1.3"/></svg>
<svg style="left:1783px;top:931px" width="20" height="18"><path d="M2 16L16 2" fill="none" stroke="#d0d0d0" stroke-width="1.3"/></svg>
<svg style="left:1833px;top:931px" width="20" height="18"><path d="M9 1V17M1 9H17" fill="none" stroke="#d0d0d0" stroke-width="1.3"/></svg>
<svg style="left:1683px;top:977px" width="20" height="20"><rect x="4" y="3" width="5" height="5" fill="#888" stroke="#d0d0d0"/><path d="M9 5.5H17M6.5 8V17" fill="none" stroke="#d0d0d0" stroke-width="1.3"/></svg>
<svg style="left:1733px;top:977px" width="20" height="20"><rect x="4" y="3" width="5" height="5" fill="#888" stroke="#d0d0d0"/><path d="M9 5.5H15M6.5 8V15" fill="none" stroke="#d0d0d0" stroke-width="1.3"/><circle cx="16" cy="5.5" r="1.8" fill="#d0d0d0"/><circle cx="6.5" cy="16" r="1.8" fill="#d0d0d0"/></svg>
<svg style="left:1783px;top:977px" width="20" height="20"><path d="M2 2L17 17" fill="none" stroke="#d0d0d0" stroke-width="1.3"/><rect x="7" y="7" width="5" height="5" fill="#888" stroke="#d0d0d0"/><circle cx="3" cy="3" r="1.8" fill="#d0d0d0"/><circle cx="16" cy="16" r="1.8" fill="#d0d0d0"/></svg>
<svg style="left:1833px;top:977px" width="20" height="20"><path d="M2 17L17 2" fill="none" stroke="#d0d0d0" stroke-width="1.3"/><rect x="7" y="7" width="5" height="5" fill="#888" stroke="#d0d0d0"/><circle cx="3" cy="16" r="1.8" fill="#d0d0d0"/><circle cx="15" cy="4" r="1.8" fill="#d0d0d0"/></svg>
<div class="a" style="left:1672px;top:1003px;width:248px;height:2px;background:#2e2e2e;"></div>
<div class="a" style="left:1672px;top:1005px;width:248px;height:25px;background:#383838;"></div>
<div class="a" style="left:1672px;top:1005px;width:112px;height:25px;background:#4a4a4a;"></div>
<svg style="left:1679px;top:1012px" width="6" height="12" fill="#cfcfcf"><path d="M3 0L6 4H0Z M3 12L6 8H0Z"/></svg>
<div class="a t" style="left:1688px;top:1011px;font-size:12.5px;color:#ececec;font-weight:bold;">Zeichenformate</div>
<div class="a t" style="left:1793px;top:1011px;font-size:12px;color:#9c9c9c;font-weight:bold;">Absatzformate</div>
<svg style="left:1898px;top:1012px" width="19" height="12" fill="#cfcfcf"><path d="M0 4H4L2 6Z"/><rect x="6" y="1" width="12" height="1.5"/><rect x="6" y="4.5" width="12" height="1.5"/><rect x="6" y="8" width="12" height="1.5"/></svg>
<div class="a" style="left:566px;top:167px;width:238px;height:30px;border:5px solid #f00d0d;"></div>
<div class="a" style="left:796px;top:71px;width:27px;height:28px;border:5px solid #f00d0d;"></div>
<div class="a" style="left:801px;top:76px;width:17px;height:19px;background:#3e3e3e;"></div>
<svg style="left:802px;top:79px" width="14" height="14" fill="#d8d8d8"><rect x="1" y="2" width="12" height="1.3"/><rect x="1" y="5" width="12" height="1.3"/><rect x="1" y="8" width="12" height="1.3"/><rect x="1" y="11" width="12" height="1.3"/></svg></body></html>
